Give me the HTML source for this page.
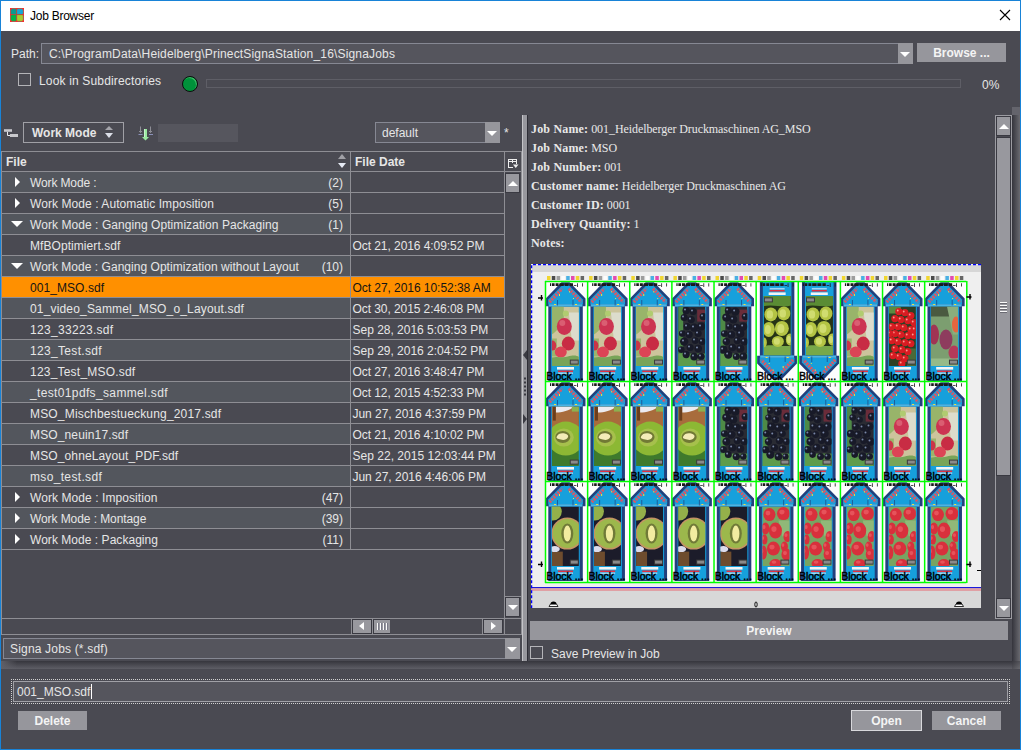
<!DOCTYPE html>
<html><head><meta charset="utf-8">
<style>
*{box-sizing:border-box}
html,body{margin:0;padding:0;width:1021px;height:750px;overflow:hidden;background:#4a4a52}
body{position:relative;font-family:"Liberation Sans",sans-serif;font-size:12px;color:#e6e6e6}
.a{position:absolute}
.t{position:absolute;white-space:nowrap;line-height:14px}
.b{font-weight:bold}
.btn{position:absolute;background:#96969c;color:#f4f4f4;font-weight:bold;text-align:center;line-height:21px}
.fld{position:absolute;background:#55555d;border:1px solid #868893}
.dd{position:absolute;background:#96969c}
.tri-d{position:absolute;width:0;height:0;border-left:5px solid transparent;border-right:5px solid transparent;border-top:5px solid #fff}
.tri-u{position:absolute;width:0;height:0;border-left:5px solid transparent;border-right:5px solid transparent;border-bottom:5px solid #fff}
.tri-r{position:absolute;width:0;height:0;border-top:5px solid transparent;border-bottom:5px solid transparent;border-left:5px solid #fff}
.tri-l{position:absolute;width:0;height:0;border-top:5px solid transparent;border-bottom:5px solid transparent;border-right:5px solid #fff}
.hl{position:absolute;height:1px;background:#8e8e94}
.vl{position:absolute;width:1px;background:#8e8e94}
.serif{font-family:"Liberation Serif",serif}
</style></head><body>
<!-- window frame -->
<div class="a" style="left:0;top:0;width:1021px;height:750px;border:1px solid #1883d7"></div>
<div class="a" style="left:1px;top:1px;width:1019px;height:30px;background:#fff"></div>
<!-- title icon -->
<svg class="a" style="left:10px;top:8px" width="14" height="14" viewBox="0 0 14 14">
<rect x="1" y="1" width="5.6" height="5.6" fill="#0a9a90"/><rect x="6.6" y="1" width="6.4" height="5.6" fill="#12a8d8"/>
<rect x="1" y="6.6" width="5.6" height="6.4" fill="#00b648"/><rect x="6.6" y="6.6" width="6.4" height="6.4" fill="#a6d030"/>
<path d="M0.6 0.6H13.4V13.4H0.6Z M6.6 0.6V13.4 M0.6 6.6H13.4" fill="none" stroke="#a84a3a" stroke-width="1"/>
<g fill="#ff2a2a"><circle cx="0.8" cy="0.8" r="1"/><circle cx="6.6" cy="0.6" r="0.9"/><circle cx="13.2" cy="0.8" r="1"/><circle cx="0.6" cy="6.6" r="0.9"/><circle cx="13.4" cy="6.6" r="0.9"/><circle cx="0.8" cy="13.2" r="1"/><circle cx="6.6" cy="13.4" r="0.9"/><circle cx="13.2" cy="13.2" r="1"/></g>
</svg>
<div class="t" style="left:30px;top:9px;color:#000;font-size:12px;letter-spacing:-0.25px">Job Browser</div>
<svg class="a" style="left:999px;top:9px" width="12" height="12" viewBox="0 0 12 12"><path d="M1 1L11 11M11 1L1 11" stroke="#000" stroke-width="1.1"/></svg>

<!-- path row -->
<div class="t" style="left:11px;top:47px">Path:</div>
<div class="fld" style="left:41px;top:43px;width:872px;height:21px"></div>
<div class="t" style="left:49px;top:47px;letter-spacing:0.17px">C:\ProgramData\Heidelberg\PrinectSignaStation_16\SignaJobs</div>
<div class="dd" style="left:898px;top:43px;width:15px;height:21px"></div>
<div class="tri-d" style="left:900px;top:52px"></div>
<div class="btn" style="left:917px;top:43px;width:89px;height:19px">Browse ...</div>

<!-- subdirs row -->
<div class="a" style="left:18px;top:73px;width:13px;height:13px;border:1px solid #b4b4b8"></div>
<div class="t" style="left:39px;top:74px;letter-spacing:0.16px">Look in Subdirectories</div>
<div class="a" style="left:182px;top:76px;width:16px;height:16px;border-radius:50%;background:#00923a;border:1.3px solid #0c0c0c;box-shadow:inset -1px 1px 0 rgba(120,230,150,0.5)"></div>
<div class="a" style="left:206px;top:79px;width:755px;height:9px;border:1px solid #5e5e66"></div>
<div class="t" style="left:982px;top:78px">0%</div>

<!-- LEFT PANEL toolbar -->
<svg class="a" style="left:3px;top:128px" width="17" height="11" viewBox="0 0 17 11">
<rect x="1" y="1.2" width="8" height="2.6" fill="#c8c8cc"/>
<rect x="7" y="6" width="8" height="3" fill="#c8c8cc"/>
<path d="M4.5 3.8V7.5H7" fill="none" stroke="#e8e8ec" stroke-width="1"/>
</svg>
<div class="a" style="left:23px;top:122px;width:101px;height:21px;border:1px solid #a0a0a6"></div>
<div class="t b" style="left:32px;top:126px;font-size:12px">Work Mode</div>
<div class="a" style="left:105px;top:126px;width:0;height:0;border-left:4.5px solid transparent;border-right:4.5px solid transparent;border-bottom:4.5px solid #a4a4aa"></div>
<div class="a" style="left:105px;top:133px;width:0;height:0;border-left:4.5px solid transparent;border-right:4.5px solid transparent;border-top:5px solid #dcdfe8"></div>
<svg class="a" style="left:138px;top:125px" width="16" height="16" viewBox="0 0 16 16">
<path d="M2.5 1.5V7.5M1 6L2.5 7.5L4 6M12.5 1.5V7.5M11 6L12.5 7.5L14 6" fill="none" stroke="#8e8e96" stroke-width="1"/>
<path d="M0.5 9.5H4.5M11 9.5H15" stroke="#8a90b8" stroke-width="1"/>
<path d="M6 4H9V12H11L7.5 15.5L4 12H6Z" fill="#9ae8a0"/>
<path d="M6.5 4V12" stroke="#c8f4cc" stroke-width="1"/>
</svg>
<div class="a" style="left:158px;top:124px;width:80px;height:18px;background:#56565e"></div>

<div class="fld" style="left:375px;top:122px;width:125px;height:21px"></div>
<div class="t" style="left:382px;top:126px">default</div>
<div class="dd" style="left:485px;top:122px;width:15px;height:21px"></div>
<div class="tri-d" style="left:487px;top:131px"></div>
<div class="t" style="left:504px;top:126px">*</div>

<!-- TABLE -->
<div class="a" style="left:1px;top:151px;width:521px;height:484px;background:#4a4a52"></div>
<div class="t b" style="left:6px;top:155px">File</div>
<div class="t b" style="left:355px;top:155px">File Date</div>
<div class="a" style="left:2px;top:172px;width:349px;height:20px;background:#53565d"></div>
<div class="t" style="left:30px;top:176px;color:#e6e6e6;letter-spacing:-0.128px">Work Mode :</div>
<div class="t" style="left:250px;width:93px;text-align:right;top:176px">(2)</div>
<div class="tri-r" style="left:15px;top:177px"></div>
<div class="t" style="left:30px;top:197px;color:#e6e6e6;letter-spacing:0.07px">Work Mode : Automatic Imposition</div>
<div class="t" style="left:250px;width:93px;text-align:right;top:197px">(5)</div>
<div class="tri-r" style="left:15px;top:198px"></div>
<div class="a" style="left:2px;top:214px;width:349px;height:20px;background:#53565d"></div>
<div class="t" style="left:30px;top:218px;color:#e6e6e6;letter-spacing:0.062px">Work Mode : Ganging Optimization Packaging</div>
<div class="t" style="left:250px;width:93px;text-align:right;top:218px">(1)</div>
<div class="tri-d" style="left:11px;top:221px;border-left-width:6px;border-right-width:6px;border-top-width:6px"></div>
<div class="t" style="left:30px;top:239px;color:#e6e6e6;letter-spacing:0.065px">MfBOptimiert.sdf</div>
<div class="t" style="left:352.5px;top:239px;color:#e6e6e6;letter-spacing:-0.062px">Oct 21, 2016 4:09:52 PM</div>
<div class="a" style="left:2px;top:256px;width:349px;height:20px;background:#53565d"></div>
<div class="t" style="left:30px;top:260px;color:#e6e6e6;letter-spacing:0.035px">Work Mode : Ganging Optimization without Layout</div>
<div class="t" style="left:250px;width:93px;text-align:right;top:260px">(10)</div>
<div class="tri-d" style="left:11px;top:263px;border-left-width:6px;border-right-width:6px;border-top-width:6px"></div>
<div class="a" style="left:2px;top:277px;width:503px;height:20px;background:#ff9000"></div>
<div class="t" style="left:30px;top:281px;color:#141414;letter-spacing:0.066px">001_MSO.sdf</div>
<div class="t" style="left:352.5px;top:281px;color:#141414;letter-spacing:-0.052px">Oct 27, 2016 10:52:38 AM</div>
<div class="a" style="left:2px;top:298px;width:349px;height:20px;background:#53565d"></div>
<div class="t" style="left:30px;top:302px;color:#e6e6e6;letter-spacing:0.166px">01_video_Sammel_MSO_o_Layout.sdf</div>
<div class="t" style="left:352.5px;top:302px;color:#e6e6e6;letter-spacing:-0.071px">Oct 30, 2015 2:46:08 PM</div>
<div class="t" style="left:30px;top:323px;color:#e6e6e6;letter-spacing:0.315px">123_33223.sdf</div>
<div class="t" style="left:352.5px;top:323px;color:#e6e6e6;letter-spacing:-0.013px">Sep 28, 2016 5:03:53 PM</div>
<div class="a" style="left:2px;top:340px;width:349px;height:20px;background:#53565d"></div>
<div class="t" style="left:30px;top:344px;color:#e6e6e6;letter-spacing:0.329px">123_Test.sdf</div>
<div class="t" style="left:352.5px;top:344px;color:#e6e6e6;letter-spacing:-0.013px">Sep 29, 2016 2:04:52 PM</div>
<div class="t" style="left:30px;top:365px;color:#e6e6e6;letter-spacing:0.209px">123_Test_MSO.sdf</div>
<div class="t" style="left:352.5px;top:365px;color:#e6e6e6;letter-spacing:-0.071px">Oct 27, 2016 3:48:47 PM</div>
<div class="a" style="left:2px;top:382px;width:349px;height:20px;background:#53565d"></div>
<div class="t" style="left:30px;top:386px;color:#e6e6e6;letter-spacing:0.356px">_test01pdfs_sammel.sdf</div>
<div class="t" style="left:352.5px;top:386px;color:#e6e6e6;letter-spacing:-0.071px">Oct 12, 2015 4:52:33 PM</div>
<div class="t" style="left:30px;top:407px;color:#e6e6e6;letter-spacing:0.176px">MSO_Mischbestueckung_2017.sdf</div>
<div class="t" style="left:352.5px;top:407px;color:#e6e6e6;letter-spacing:-0.026px">Jun 27, 2016 4:37:59 PM</div>
<div class="a" style="left:2px;top:424px;width:349px;height:20px;background:#53565d"></div>
<div class="t" style="left:30px;top:428px;color:#e6e6e6;letter-spacing:0.136px">MSO_neuin17.sdf</div>
<div class="t" style="left:352.5px;top:428px;color:#e6e6e6;letter-spacing:-0.071px">Oct 21, 2016 4:10:02 PM</div>
<div class="t" style="left:30px;top:449px;color:#e6e6e6;letter-spacing:0.131px">MSO_ohneLayout_PDF.sdf</div>
<div class="t" style="left:352.5px;top:449px;color:#e6e6e6;letter-spacing:0.017px">Sep 22, 2015 12:03:44 PM</div>
<div class="a" style="left:2px;top:466px;width:349px;height:20px;background:#53565d"></div>
<div class="t" style="left:30px;top:470px;color:#e6e6e6;letter-spacing:0.339px">mso_test.sdf</div>
<div class="t" style="left:352.5px;top:470px;color:#e6e6e6;letter-spacing:-0.026px">Jun 27, 2016 4:46:06 PM</div>
<div class="t" style="left:30px;top:491px;color:#e6e6e6;letter-spacing:0.076px">Work Mode : Imposition</div>
<div class="t" style="left:250px;width:93px;text-align:right;top:491px">(47)</div>
<div class="tri-r" style="left:15px;top:492px"></div>
<div class="a" style="left:2px;top:508px;width:349px;height:20px;background:#53565d"></div>
<div class="t" style="left:30px;top:512px;color:#e6e6e6;letter-spacing:-0.081px">Work Mode : Montage</div>
<div class="t" style="left:250px;width:93px;text-align:right;top:512px">(39)</div>
<div class="tri-r" style="left:15px;top:513px"></div>
<div class="t" style="left:30px;top:533px;color:#e6e6e6;letter-spacing:0.039px">Work Mode : Packaging</div>
<div class="t" style="left:250px;width:93px;text-align:right;top:533px">(11)</div>
<div class="tri-r" style="left:15px;top:534px"></div>
<div class="hl" style="left:1px;top:151px;width:521px"></div>
<div class="hl" style="left:1px;top:171px;width:521px"></div>
<div class="hl" style="left:1px;top:192px;width:504px"></div>
<div class="hl" style="left:1px;top:213px;width:504px"></div>
<div class="hl" style="left:1px;top:234px;width:504px"></div>
<div class="hl" style="left:1px;top:255px;width:504px"></div>
<div class="hl" style="left:1px;top:276px;width:504px"></div>
<div class="hl" style="left:1px;top:297px;width:504px"></div>
<div class="hl" style="left:1px;top:318px;width:504px"></div>
<div class="hl" style="left:1px;top:339px;width:504px"></div>
<div class="hl" style="left:1px;top:360px;width:504px"></div>
<div class="hl" style="left:1px;top:381px;width:504px"></div>
<div class="hl" style="left:1px;top:402px;width:504px"></div>
<div class="hl" style="left:1px;top:423px;width:504px"></div>
<div class="hl" style="left:1px;top:444px;width:504px"></div>
<div class="hl" style="left:1px;top:465px;width:504px"></div>
<div class="hl" style="left:1px;top:486px;width:504px"></div>
<div class="hl" style="left:1px;top:507px;width:504px"></div>
<div class="hl" style="left:1px;top:528px;width:504px"></div>
<div class="hl" style="left:1px;top:549px;width:504px"></div>
<div class="hl" style="left:1px;top:618px;width:521px"></div>
<div class="hl" style="left:1px;top:634px;width:521px"></div>
<div class="vl" style="left:1px;top:151px;height:484px"></div>
<div class="vl" style="left:350px;top:151px;height:398px"></div>
<div class="vl" style="left:504px;top:151px;height:484px"></div>
<div class="vl" style="left:521px;top:151px;height:484px"></div>
<div class="a" style="left:338px;top:154px;width:0;height:0;border-left:4.5px solid transparent;border-right:4.5px solid transparent;border-bottom:5px solid #a0a0a6"></div>
<div class="a" style="left:338px;top:163px;width:0;height:0;border-left:4.5px solid transparent;border-right:4.5px solid transparent;border-top:5px solid #e6eaf4"></div>
<svg class="a" style="left:507px;top:158px" width="12" height="11" viewBox="0 0 12 11"><path d="M1 1.5H10M1 3.5H10M1.5 1V10M5.5 1V5M9.5 1V6M1 9.5H6" fill="none" stroke="#eeeeee"/><path d="M6 6.5H11.5L8.75 10Z" fill="#eeeeee"/></svg>
<div class="a" style="left:505px;top:173px;width:15px;height:20px;background:#98989e;border:1px solid #3a3a42"></div>
<div class="tri-u" style="left:508px;top:181px"></div>
<div class="hl" style="left:505px;top:596px;width:16px"></div>
<div class="a" style="left:505px;top:597px;width:15px;height:20px;background:#98989e;border:1px solid #3a3a42"></div>
<div class="tri-d" style="left:508px;top:605px"></div>
<div class="vl" style="left:351px;top:618px;height:16px"></div>
<div class="a" style="left:352px;top:619px;width:20px;height:15px;background:#98989e;border:1px solid #3a3a42"></div>
<div class="tri-l" style="left:359px;top:622px;border-top-width:4.5px;border-bottom-width:4.5px;border-right-width:5px"></div>
<div class="vl" style="left:372px;top:618px;height:16px"></div>
<div class="a" style="left:373px;top:619px;width:17px;height:15px;background:#98989e;border:1px solid #3a3a42;border-right:none"></div>
<svg class="a" style="left:376px;top:622px" width="12" height="9"><path d="M1.5 1V8M4.5 1V8M7.5 1V8M10.5 1V8" stroke="#fafafa"/><path d="M2.5 1V8M5.5 1V8M8.5 1V8M11.5 1V8" stroke="#7a7a88"/></svg>
<div class="vl" style="left:482px;top:618px;height:16px"></div>
<div class="a" style="left:483px;top:619px;width:20px;height:15px;background:#98989e;border:1px solid #3a3a42"></div>
<div class="tri-r" style="left:491px;top:622px;border-top-width:4.5px;border-bottom-width:4.5px;border-left-width:5px"></div>
<!-- splitter -->
<div class="a" style="left:522px;top:115px;width:1px;height:546px;background:#c4c4c8"></div>
<div class="a" style="left:523px;top:115px;width:4px;height:546px;background:#98989e"></div>
<div class="a" style="left:527px;top:115px;width:1px;height:546px;background:#2e2e36"></div>
<div class="a" style="left:523px;top:350px;width:0;height:0;border-top:5px solid transparent;border-bottom:5px solid transparent;border-right:4px solid #3a3a42"></div>
<div class="a" style="left:523px;top:414px;width:0;height:0;border-top:5px solid transparent;border-bottom:5px solid transparent;border-left:4px solid #3a3a42"></div>
<svg class="a" style="left:523px;top:377px" width="4" height="20"><path d="M1 1.5H3M1 5.5H3M1 9.5H3M1 13.5H3M1 17.5H3" stroke="#3a3a42" stroke-width="2"/></svg>
<!-- RIGHT PANEL -->
<div class="serif t" style="left:531px;top:120px;line-height:19px;font-size:12px;color:#e8e8e8;letter-spacing:-0.08px">
<b style="letter-spacing:0.18px">Job Name:</b> 001_Heidelberger Druckmaschinen AG_MSO<br>
<b style="letter-spacing:0.18px">Job Name:</b> MSO<br>
<b style="letter-spacing:0.18px">Job Number:</b> 001<br>
<b style="letter-spacing:0.18px">Customer name:</b> Heidelberger Druckmaschinen AG<br>
<b style="letter-spacing:0.18px">Customer ID:</b> 0001<br>
<b style="letter-spacing:0.18px">Delivery Quantity:</b> 1<br>
<b style="letter-spacing:0.18px">Notes:</b>
</div>

<!-- right scrollbar -->
<div class="a" style="left:1012px;top:107px;width:8px;height:554px;background:linear-gradient(90deg,#34343c,#6a6a70)"></div>
<div class="a" style="left:1012px;top:107px;width:8px;height:8px;background:#64646c"></div>
<div class="a" style="left:995px;top:115px;width:17px;height:504px;border:1px solid #9c9ca2;background:#4a4a52"></div>
<div class="a" style="left:996px;top:116px;width:15px;height:20px;background:#98989e;border:1px solid #3a3a42"></div>
<div class="tri-u" style="left:999px;top:124px"></div>
<div class="a" style="left:996px;top:137px;width:15px;height:339px;background:#98989e;border:1px solid #3a3a42"></div>
<svg class="a" style="left:1000px;top:301px" width="8" height="13"><path d="M0 1.5H7M0 4.5H7M0 7.5H7M0 10.5H7" stroke="#fafafa" stroke-width="1"/><path d="M0 2.5H7M0 5.5H7M0 8.5H7M0 11.5H7" stroke="#6a6a72" stroke-width="1"/></svg>
<div class="a" style="left:996px;top:598px;width:15px;height:20px;background:#98989e;border:1px solid #3a3a42"></div>
<div class="tri-d" style="left:999px;top:606px"></div>
<!-- preview -->
<svg class="a" style="left:531px;top:264px" width="450" height="344" viewBox="0 0 450 344">
<rect width="450" height="344" fill="#efefef"/>
<rect x="1" y="1" width="449" height="7" fill="#d6d6d6"/>
<rect x="14" y="17" width="422" height="301" fill="#fdfdfd"/>
<rect x="16.0" y="12" width="3.5" height="4" fill="#f0d000" opacity="0.8"/>
<rect x="20.8" y="12" width="3.5" height="4" fill="#222" opacity="0.8"/>
<rect x="25.6" y="12" width="3.5" height="4" fill="#888" opacity="0.8"/>
<rect x="30.4" y="12" width="3.5" height="4" fill="#fff" opacity="0.8"/>
<rect x="35.2" y="12" width="3.5" height="4" fill="#20a0e0" opacity="0.8"/>
<rect x="40.0" y="12" width="3.5" height="4" fill="#e020a0" opacity="0.8"/>
<rect x="44.8" y="12" width="3.5" height="4" fill="#f0d000" opacity="0.8"/>
<rect x="49.6" y="12" width="3.5" height="4" fill="#444" opacity="0.8"/>
<rect x="58.1" y="12" width="3.5" height="4" fill="#f0d000" opacity="0.8"/>
<rect x="62.9" y="12" width="3.5" height="4" fill="#222" opacity="0.8"/>
<rect x="67.7" y="12" width="3.5" height="4" fill="#888" opacity="0.8"/>
<rect x="72.5" y="12" width="3.5" height="4" fill="#fff" opacity="0.8"/>
<rect x="77.3" y="12" width="3.5" height="4" fill="#20a0e0" opacity="0.8"/>
<rect x="82.1" y="12" width="3.5" height="4" fill="#e020a0" opacity="0.8"/>
<rect x="86.9" y="12" width="3.5" height="4" fill="#f0d000" opacity="0.8"/>
<rect x="91.7" y="12" width="3.5" height="4" fill="#444" opacity="0.8"/>
<rect x="100.3" y="12" width="3.5" height="4" fill="#f0d000" opacity="0.8"/>
<rect x="105.1" y="12" width="3.5" height="4" fill="#222" opacity="0.8"/>
<rect x="109.9" y="12" width="3.5" height="4" fill="#888" opacity="0.8"/>
<rect x="114.7" y="12" width="3.5" height="4" fill="#fff" opacity="0.8"/>
<rect x="119.5" y="12" width="3.5" height="4" fill="#20a0e0" opacity="0.8"/>
<rect x="124.3" y="12" width="3.5" height="4" fill="#e020a0" opacity="0.8"/>
<rect x="129.1" y="12" width="3.5" height="4" fill="#f0d000" opacity="0.8"/>
<rect x="133.9" y="12" width="3.5" height="4" fill="#444" opacity="0.8"/>
<rect x="142.4" y="12" width="3.5" height="4" fill="#f0d000" opacity="0.8"/>
<rect x="147.2" y="12" width="3.5" height="4" fill="#222" opacity="0.8"/>
<rect x="152.0" y="12" width="3.5" height="4" fill="#888" opacity="0.8"/>
<rect x="156.8" y="12" width="3.5" height="4" fill="#fff" opacity="0.8"/>
<rect x="161.6" y="12" width="3.5" height="4" fill="#20a0e0" opacity="0.8"/>
<rect x="166.4" y="12" width="3.5" height="4" fill="#e020a0" opacity="0.8"/>
<rect x="171.2" y="12" width="3.5" height="4" fill="#f0d000" opacity="0.8"/>
<rect x="176.0" y="12" width="3.5" height="4" fill="#444" opacity="0.8"/>
<rect x="184.5" y="12" width="3.5" height="4" fill="#f0d000" opacity="0.8"/>
<rect x="189.3" y="12" width="3.5" height="4" fill="#222" opacity="0.8"/>
<rect x="194.1" y="12" width="3.5" height="4" fill="#888" opacity="0.8"/>
<rect x="198.9" y="12" width="3.5" height="4" fill="#fff" opacity="0.8"/>
<rect x="203.7" y="12" width="3.5" height="4" fill="#20a0e0" opacity="0.8"/>
<rect x="208.5" y="12" width="3.5" height="4" fill="#e020a0" opacity="0.8"/>
<rect x="213.3" y="12" width="3.5" height="4" fill="#f0d000" opacity="0.8"/>
<rect x="218.1" y="12" width="3.5" height="4" fill="#444" opacity="0.8"/>
<rect x="226.7" y="12" width="3.5" height="4" fill="#f0d000" opacity="0.8"/>
<rect x="231.5" y="12" width="3.5" height="4" fill="#222" opacity="0.8"/>
<rect x="236.2" y="12" width="3.5" height="4" fill="#888" opacity="0.8"/>
<rect x="241.1" y="12" width="3.5" height="4" fill="#fff" opacity="0.8"/>
<rect x="245.8" y="12" width="3.5" height="4" fill="#20a0e0" opacity="0.8"/>
<rect x="250.7" y="12" width="3.5" height="4" fill="#e020a0" opacity="0.8"/>
<rect x="255.4" y="12" width="3.5" height="4" fill="#f0d000" opacity="0.8"/>
<rect x="260.2" y="12" width="3.5" height="4" fill="#444" opacity="0.8"/>
<rect x="268.8" y="12" width="3.5" height="4" fill="#f0d000" opacity="0.8"/>
<rect x="273.6" y="12" width="3.5" height="4" fill="#222" opacity="0.8"/>
<rect x="278.4" y="12" width="3.5" height="4" fill="#888" opacity="0.8"/>
<rect x="283.2" y="12" width="3.5" height="4" fill="#fff" opacity="0.8"/>
<rect x="288.0" y="12" width="3.5" height="4" fill="#20a0e0" opacity="0.8"/>
<rect x="292.8" y="12" width="3.5" height="4" fill="#e020a0" opacity="0.8"/>
<rect x="297.6" y="12" width="3.5" height="4" fill="#f0d000" opacity="0.8"/>
<rect x="302.4" y="12" width="3.5" height="4" fill="#444" opacity="0.8"/>
<rect x="310.9" y="12" width="3.5" height="4" fill="#f0d000" opacity="0.8"/>
<rect x="315.7" y="12" width="3.5" height="4" fill="#222" opacity="0.8"/>
<rect x="320.5" y="12" width="3.5" height="4" fill="#888" opacity="0.8"/>
<rect x="325.3" y="12" width="3.5" height="4" fill="#fff" opacity="0.8"/>
<rect x="330.1" y="12" width="3.5" height="4" fill="#20a0e0" opacity="0.8"/>
<rect x="334.9" y="12" width="3.5" height="4" fill="#e020a0" opacity="0.8"/>
<rect x="339.7" y="12" width="3.5" height="4" fill="#f0d000" opacity="0.8"/>
<rect x="344.5" y="12" width="3.5" height="4" fill="#444" opacity="0.8"/>
<rect x="353.0" y="12" width="3.5" height="4" fill="#f0d000" opacity="0.8"/>
<rect x="357.8" y="12" width="3.5" height="4" fill="#222" opacity="0.8"/>
<rect x="362.6" y="12" width="3.5" height="4" fill="#888" opacity="0.8"/>
<rect x="367.4" y="12" width="3.5" height="4" fill="#fff" opacity="0.8"/>
<rect x="372.2" y="12" width="3.5" height="4" fill="#20a0e0" opacity="0.8"/>
<rect x="377.0" y="12" width="3.5" height="4" fill="#e020a0" opacity="0.8"/>
<rect x="381.8" y="12" width="3.5" height="4" fill="#f0d000" opacity="0.8"/>
<rect x="386.6" y="12" width="3.5" height="4" fill="#444" opacity="0.8"/>
<rect x="395.2" y="12" width="3.5" height="4" fill="#f0d000" opacity="0.8"/>
<rect x="400.0" y="12" width="3.5" height="4" fill="#222" opacity="0.8"/>
<rect x="404.8" y="12" width="3.5" height="4" fill="#888" opacity="0.8"/>
<rect x="409.6" y="12" width="3.5" height="4" fill="#fff" opacity="0.8"/>
<rect x="414.4" y="12" width="3.5" height="4" fill="#20a0e0" opacity="0.8"/>
<rect x="419.2" y="12" width="3.5" height="4" fill="#e020a0" opacity="0.8"/>
<rect x="424.0" y="12" width="3.5" height="4" fill="#f0d000" opacity="0.8"/>
<rect x="428.8" y="12" width="3.5" height="4" fill="#444" opacity="0.8"/>
<g transform="translate(14.00,17)"><path d="M0.7 25.3V17.6L16.4 1.2H24.6L40.5 17.6V25.3H37.8V100H3.3V25.3Z" fill="#22407c"/><path d="M3.2 23.2V18.6L17.5 4H23.5L37.9 18.6V23.2Z" fill="#16a0dc"/><rect x="3.6" y="23.2" width="33.9" height="2.4" fill="#48b6e6"/><rect x="6.2" y="25.5" width="28.6" height="73.5" fill="#16a0dc"/><path d="M4.6 21.2L17.2 7.6M23.8 7.6L36.4 21.2" stroke="#dc5664" stroke-width="3.2" stroke-dasharray="2 1"/><path d="M9 23.5H11M30 23.5H32M14.5 13V15M24.5 10.2V11.4M28.5 17V18" stroke="#f2e040" stroke-width="1"/><path d="M12.5 19V24.5M28 19V24.5" stroke="#22407c" stroke-width="0.7"/><clipPath id="c1"><rect x="0" y="0" width="27" height="59.4"/></clipPath><g transform="translate(6.8,25.6)" clip-path="url(#c1)"><rect width="28" height="60" fill="#ccc49c"/><path d="M0 0H12V14C8 20 4 26 0 28Z" fill="#98b46a"/><path d="M17 6H28V34H20Z" fill="#dcdccc"/><path d="M0 32H5V50H0Z" fill="#9ab46c"/><ellipse cx="14" cy="7" rx="3" ry="3" fill="#b0cc70"/><ellipse cx="12.5" cy="20" rx="7.5" ry="8.5" fill="#cc3452"/><ellipse cx="10.5" cy="16.5" rx="3" ry="3" fill="#e07080" opacity="0.7"/><ellipse cx="16.5" cy="37" rx="6.5" ry="7" fill="#c82c44"/><ellipse cx="9" cy="45.5" rx="6" ry="5.5" fill="#dc4456"/><ellipse cx="0.5" cy="39" rx="4" ry="5" fill="#cc3448"/><path d="M0 51C6 49 10 52 16 50S26 49 28 51V60H0Z" fill="#78a458"/><rect x="18" y="53" width="9" height="5" fill="#3a3a3a"/><rect x="19" y="54" width="7" height="3" fill="#8a8a8a"/></g><rect x="12" y="86" width="17" height="2.6" fill="#f4f4f4"/><rect x="13" y="89.5" width="15" height="1.6" fill="#e03040"/><rect x="13" y="91.5" width="15" height="1.6" fill="#dcefff" opacity="0.7"/><path d="M5 2.3h1.2v2.8H5zM7 2.3h2.6v2.8H7zM10.6 2.3h3v2.8h-3zM14.4 2.3h4.4v2.8h-4.4zM19.6 2.3h4v2.8h-4zM24.6 2.3h3.4v2.8h-3.4zM28.8 3.9h2.6v0.8h-2.6zM32 2.2h0.8v3.8H32zM37 2.2h0.8v3.4H37z" fill="#1a1a1a"/><text x="1.3" y="98.8" font-family="Liberation Sans" font-size="10.5" fill="#000" textLength="37" lengthAdjust="spacing" stroke="#000" stroke-width="0.45">Block ...</text></g>
<g transform="translate(56.13,17)"><path d="M0.7 25.3V17.6L16.4 1.2H24.6L40.5 17.6V25.3H37.8V100H3.3V25.3Z" fill="#22407c"/><path d="M3.2 23.2V18.6L17.5 4H23.5L37.9 18.6V23.2Z" fill="#16a0dc"/><rect x="3.6" y="23.2" width="33.9" height="2.4" fill="#48b6e6"/><rect x="6.2" y="25.5" width="28.6" height="73.5" fill="#16a0dc"/><path d="M4.6 21.2L17.2 7.6M23.8 7.6L36.4 21.2" stroke="#dc5664" stroke-width="3.2" stroke-dasharray="2 1"/><path d="M9 23.5H11M30 23.5H32M14.5 13V15M24.5 10.2V11.4M28.5 17V18" stroke="#f2e040" stroke-width="1"/><path d="M12.5 19V24.5M28 19V24.5" stroke="#22407c" stroke-width="0.7"/><clipPath id="c2"><rect x="0" y="0" width="27" height="59.4"/></clipPath><g transform="translate(6.8,25.6)" clip-path="url(#c2)"><rect width="28" height="60" fill="#ccc49c"/><path d="M0 0H12V14C8 20 4 26 0 28Z" fill="#98b46a"/><path d="M17 6H28V34H20Z" fill="#dcdccc"/><path d="M0 32H5V50H0Z" fill="#9ab46c"/><ellipse cx="14" cy="7" rx="3" ry="3" fill="#b0cc70"/><ellipse cx="12.5" cy="20" rx="7.5" ry="8.5" fill="#cc3452"/><ellipse cx="10.5" cy="16.5" rx="3" ry="3" fill="#e07080" opacity="0.7"/><ellipse cx="16.5" cy="37" rx="6.5" ry="7" fill="#c82c44"/><ellipse cx="9" cy="45.5" rx="6" ry="5.5" fill="#dc4456"/><ellipse cx="0.5" cy="39" rx="4" ry="5" fill="#cc3448"/><path d="M0 51C6 49 10 52 16 50S26 49 28 51V60H0Z" fill="#78a458"/><rect x="18" y="53" width="9" height="5" fill="#3a3a3a"/><rect x="19" y="54" width="7" height="3" fill="#8a8a8a"/></g><rect x="12" y="86" width="17" height="2.6" fill="#f4f4f4"/><rect x="13" y="89.5" width="15" height="1.6" fill="#e03040"/><rect x="13" y="91.5" width="15" height="1.6" fill="#dcefff" opacity="0.7"/><path d="M5 2.3h1.2v2.8H5zM7 2.3h2.6v2.8H7zM10.6 2.3h3v2.8h-3zM14.4 2.3h4.4v2.8h-4.4zM19.6 2.3h4v2.8h-4zM24.6 2.3h3.4v2.8h-3.4zM28.8 3.9h2.6v0.8h-2.6zM32 2.2h0.8v3.8H32zM37 2.2h0.8v3.4H37z" fill="#1a1a1a"/><text x="1.3" y="98.8" font-family="Liberation Sans" font-size="10.5" fill="#000" textLength="37" lengthAdjust="spacing" stroke="#000" stroke-width="0.45">Block ...</text></g>
<g transform="translate(98.26,17)"><path d="M0.7 25.3V17.6L16.4 1.2H24.6L40.5 17.6V25.3H37.8V100H3.3V25.3Z" fill="#22407c"/><path d="M3.2 23.2V18.6L17.5 4H23.5L37.9 18.6V23.2Z" fill="#16a0dc"/><rect x="3.6" y="23.2" width="33.9" height="2.4" fill="#48b6e6"/><rect x="6.2" y="25.5" width="28.6" height="73.5" fill="#16a0dc"/><path d="M4.6 21.2L17.2 7.6M23.8 7.6L36.4 21.2" stroke="#dc5664" stroke-width="3.2" stroke-dasharray="2 1"/><path d="M9 23.5H11M30 23.5H32M14.5 13V15M24.5 10.2V11.4M28.5 17V18" stroke="#f2e040" stroke-width="1"/><path d="M12.5 19V24.5M28 19V24.5" stroke="#22407c" stroke-width="0.7"/><clipPath id="c3"><rect x="0" y="0" width="27" height="59.4"/></clipPath><g transform="translate(6.8,25.6)" clip-path="url(#c3)"><rect width="28" height="60" fill="#ccc49c"/><path d="M0 0H12V14C8 20 4 26 0 28Z" fill="#98b46a"/><path d="M17 6H28V34H20Z" fill="#dcdccc"/><path d="M0 32H5V50H0Z" fill="#9ab46c"/><ellipse cx="14" cy="7" rx="3" ry="3" fill="#b0cc70"/><ellipse cx="12.5" cy="20" rx="7.5" ry="8.5" fill="#cc3452"/><ellipse cx="10.5" cy="16.5" rx="3" ry="3" fill="#e07080" opacity="0.7"/><ellipse cx="16.5" cy="37" rx="6.5" ry="7" fill="#c82c44"/><ellipse cx="9" cy="45.5" rx="6" ry="5.5" fill="#dc4456"/><ellipse cx="0.5" cy="39" rx="4" ry="5" fill="#cc3448"/><path d="M0 51C6 49 10 52 16 50S26 49 28 51V60H0Z" fill="#78a458"/><rect x="18" y="53" width="9" height="5" fill="#3a3a3a"/><rect x="19" y="54" width="7" height="3" fill="#8a8a8a"/></g><rect x="12" y="86" width="17" height="2.6" fill="#f4f4f4"/><rect x="13" y="89.5" width="15" height="1.6" fill="#e03040"/><rect x="13" y="91.5" width="15" height="1.6" fill="#dcefff" opacity="0.7"/><path d="M5 2.3h1.2v2.8H5zM7 2.3h2.6v2.8H7zM10.6 2.3h3v2.8h-3zM14.4 2.3h4.4v2.8h-4.4zM19.6 2.3h4v2.8h-4zM24.6 2.3h3.4v2.8h-3.4zM28.8 3.9h2.6v0.8h-2.6zM32 2.2h0.8v3.8H32zM37 2.2h0.8v3.4H37z" fill="#1a1a1a"/><text x="1.3" y="98.8" font-family="Liberation Sans" font-size="10.5" fill="#000" textLength="37" lengthAdjust="spacing" stroke="#000" stroke-width="0.45">Block ...</text></g>
<g transform="translate(140.39,17)"><path d="M0.7 25.3V17.6L16.4 1.2H24.6L40.5 17.6V25.3H37.8V100H3.3V25.3Z" fill="#22407c"/><path d="M3.2 23.2V18.6L17.5 4H23.5L37.9 18.6V23.2Z" fill="#16a0dc"/><rect x="3.6" y="23.2" width="33.9" height="2.4" fill="#48b6e6"/><rect x="6.2" y="25.5" width="28.6" height="73.5" fill="#16a0dc"/><path d="M4.6 21.2L17.2 7.6M23.8 7.6L36.4 21.2" stroke="#dc5664" stroke-width="3.2" stroke-dasharray="2 1"/><path d="M9 23.5H11M30 23.5H32M14.5 13V15M24.5 10.2V11.4M28.5 17V18" stroke="#f2e040" stroke-width="1"/><path d="M12.5 19V24.5M28 19V24.5" stroke="#22407c" stroke-width="0.7"/><clipPath id="c4"><rect x="0" y="0" width="27" height="59.4"/></clipPath><g transform="translate(6.8,25.6)" clip-path="url(#c4)"><rect width="28" height="60" fill="#2a2c34"/><rect width="5" height="60" fill="#4e8a46"/><rect x="19" y="3" width="9" height="12" fill="#6a2c3a"/><rect y="47" width="28" height="13" fill="#5e9c4c"/><circle cx="8" cy="4" r="3.7" fill="#181a28"/><circle cx="6.8" cy="2.8" r="1" fill="#7a88a8"/><circle cx="15" cy="5" r="3.5" fill="#181a28"/><circle cx="13.8" cy="3.8" r="1" fill="#7a88a8"/><circle cx="23" cy="20" r="4.0" fill="#181a28"/><circle cx="21.8" cy="18.8" r="1" fill="#7a88a8"/><circle cx="6" cy="11" r="3.5" fill="#181a28"/><circle cx="4.8" cy="9.8" r="1" fill="#7a88a8"/><circle cx="13" cy="13" r="3.7" fill="#181a28"/><circle cx="11.8" cy="11.8" r="1" fill="#7a88a8"/><circle cx="20" cy="27" r="3.5" fill="#181a28"/><circle cx="18.8" cy="25.8" r="1" fill="#7a88a8"/><circle cx="9" cy="20" r="3.6" fill="#181a28"/><circle cx="7.8" cy="18.8" r="1" fill="#7a88a8"/><circle cx="16" cy="21" r="4.2" fill="#181a28"/><circle cx="14.8" cy="19.8" r="1" fill="#7a88a8"/><circle cx="4" cy="27" r="3.3" fill="#181a28"/><circle cx="2.8" cy="25.8" r="1" fill="#7a88a8"/><circle cx="11" cy="28" r="3.6" fill="#181a28"/><circle cx="9.8" cy="26.8" r="1" fill="#7a88a8"/><circle cx="17" cy="34" r="3.4" fill="#181a28"/><circle cx="15.8" cy="32.8" r="1" fill="#7a88a8"/><circle cx="24" cy="35" r="3.5" fill="#181a28"/><circle cx="22.8" cy="33.8" r="1" fill="#7a88a8"/><circle cx="6" cy="35" r="4.2" fill="#181a28"/><circle cx="4.8" cy="33.8" r="1" fill="#7a88a8"/><circle cx="12" cy="41" r="3.5" fill="#181a28"/><circle cx="10.8" cy="39.8" r="1" fill="#7a88a8"/><circle cx="20" cy="42" r="3.8" fill="#181a28"/><circle cx="18.8" cy="40.8" r="1" fill="#7a88a8"/><circle cx="8" cy="48" r="3.6" fill="#181a28"/><circle cx="6.8" cy="46.8" r="1" fill="#7a88a8"/><circle cx="16" cy="50" r="3.9" fill="#181a28"/><circle cx="14.8" cy="48.8" r="1" fill="#7a88a8"/><circle cx="23" cy="50" r="3.6" fill="#181a28"/><circle cx="21.8" cy="48.8" r="1" fill="#7a88a8"/><circle cx="3" cy="43" r="3.4" fill="#181a28"/><circle cx="1.8" cy="41.8" r="1" fill="#7a88a8"/><circle cx="25" cy="10" r="3.6" fill="#181a28"/><circle cx="23.8" cy="8.8" r="1" fill="#7a88a8"/><rect x="18" y="53" width="9" height="5" fill="#3a3a3a"/><rect x="19" y="54" width="7" height="3" fill="#8a8a8a"/></g><rect x="12" y="86" width="17" height="2.6" fill="#f4f4f4"/><rect x="13" y="89.5" width="15" height="1.6" fill="#e03040"/><rect x="13" y="91.5" width="15" height="1.6" fill="#dcefff" opacity="0.7"/><path d="M5 2.3h1.2v2.8H5zM7 2.3h2.6v2.8H7zM10.6 2.3h3v2.8h-3zM14.4 2.3h4.4v2.8h-4.4zM19.6 2.3h4v2.8h-4zM24.6 2.3h3.4v2.8h-3.4zM28.8 3.9h2.6v0.8h-2.6zM32 2.2h0.8v3.8H32zM37 2.2h0.8v3.4H37z" fill="#1a1a1a"/><text x="1.3" y="98.8" font-family="Liberation Sans" font-size="10.5" fill="#000" textLength="37" lengthAdjust="spacing" stroke="#000" stroke-width="0.45">Block ...</text></g>
<g transform="translate(182.52,17)"><path d="M0.7 25.3V17.6L16.4 1.2H24.6L40.5 17.6V25.3H37.8V100H3.3V25.3Z" fill="#22407c"/><path d="M3.2 23.2V18.6L17.5 4H23.5L37.9 18.6V23.2Z" fill="#16a0dc"/><rect x="3.6" y="23.2" width="33.9" height="2.4" fill="#48b6e6"/><rect x="6.2" y="25.5" width="28.6" height="73.5" fill="#16a0dc"/><path d="M4.6 21.2L17.2 7.6M23.8 7.6L36.4 21.2" stroke="#dc5664" stroke-width="3.2" stroke-dasharray="2 1"/><path d="M9 23.5H11M30 23.5H32M14.5 13V15M24.5 10.2V11.4M28.5 17V18" stroke="#f2e040" stroke-width="1"/><path d="M12.5 19V24.5M28 19V24.5" stroke="#22407c" stroke-width="0.7"/><clipPath id="c5"><rect x="0" y="0" width="27" height="59.4"/></clipPath><g transform="translate(6.8,25.6)" clip-path="url(#c5)"><rect width="28" height="60" fill="#2a2c34"/><rect width="5" height="60" fill="#4e8a46"/><rect x="19" y="3" width="9" height="12" fill="#6a2c3a"/><rect y="47" width="28" height="13" fill="#5e9c4c"/><circle cx="8" cy="4" r="3.5" fill="#181a28"/><circle cx="6.8" cy="2.8" r="1" fill="#7a88a8"/><circle cx="15" cy="5" r="4.2" fill="#181a28"/><circle cx="13.8" cy="3.8" r="1" fill="#7a88a8"/><circle cx="23" cy="20" r="4.2" fill="#181a28"/><circle cx="21.8" cy="18.8" r="1" fill="#7a88a8"/><circle cx="6" cy="11" r="4.1" fill="#181a28"/><circle cx="4.8" cy="9.8" r="1" fill="#7a88a8"/><circle cx="13" cy="13" r="4.0" fill="#181a28"/><circle cx="11.8" cy="11.8" r="1" fill="#7a88a8"/><circle cx="20" cy="27" r="4.1" fill="#181a28"/><circle cx="18.8" cy="25.8" r="1" fill="#7a88a8"/><circle cx="9" cy="20" r="3.2" fill="#181a28"/><circle cx="7.8" cy="18.8" r="1" fill="#7a88a8"/><circle cx="16" cy="21" r="3.8" fill="#181a28"/><circle cx="14.8" cy="19.8" r="1" fill="#7a88a8"/><circle cx="4" cy="27" r="3.4" fill="#181a28"/><circle cx="2.8" cy="25.8" r="1" fill="#7a88a8"/><circle cx="11" cy="28" r="3.9" fill="#181a28"/><circle cx="9.8" cy="26.8" r="1" fill="#7a88a8"/><circle cx="17" cy="34" r="3.6" fill="#181a28"/><circle cx="15.8" cy="32.8" r="1" fill="#7a88a8"/><circle cx="24" cy="35" r="3.8" fill="#181a28"/><circle cx="22.8" cy="33.8" r="1" fill="#7a88a8"/><circle cx="6" cy="35" r="3.7" fill="#181a28"/><circle cx="4.8" cy="33.8" r="1" fill="#7a88a8"/><circle cx="12" cy="41" r="3.8" fill="#181a28"/><circle cx="10.8" cy="39.8" r="1" fill="#7a88a8"/><circle cx="20" cy="42" r="4.0" fill="#181a28"/><circle cx="18.8" cy="40.8" r="1" fill="#7a88a8"/><circle cx="8" cy="48" r="4.2" fill="#181a28"/><circle cx="6.8" cy="46.8" r="1" fill="#7a88a8"/><circle cx="16" cy="50" r="3.5" fill="#181a28"/><circle cx="14.8" cy="48.8" r="1" fill="#7a88a8"/><circle cx="23" cy="50" r="4.0" fill="#181a28"/><circle cx="21.8" cy="48.8" r="1" fill="#7a88a8"/><circle cx="3" cy="43" r="4.1" fill="#181a28"/><circle cx="1.8" cy="41.8" r="1" fill="#7a88a8"/><circle cx="25" cy="10" r="3.6" fill="#181a28"/><circle cx="23.8" cy="8.8" r="1" fill="#7a88a8"/><rect x="18" y="53" width="9" height="5" fill="#3a3a3a"/><rect x="19" y="54" width="7" height="3" fill="#8a8a8a"/></g><rect x="12" y="86" width="17" height="2.6" fill="#f4f4f4"/><rect x="13" y="89.5" width="15" height="1.6" fill="#e03040"/><rect x="13" y="91.5" width="15" height="1.6" fill="#dcefff" opacity="0.7"/><path d="M5 2.3h1.2v2.8H5zM7 2.3h2.6v2.8H7zM10.6 2.3h3v2.8h-3zM14.4 2.3h4.4v2.8h-4.4zM19.6 2.3h4v2.8h-4zM24.6 2.3h3.4v2.8h-3.4zM28.8 3.9h2.6v0.8h-2.6zM32 2.2h0.8v3.8H32zM37 2.2h0.8v3.4H37z" fill="#1a1a1a"/><text x="1.3" y="98.8" font-family="Liberation Sans" font-size="10.5" fill="#000" textLength="37" lengthAdjust="spacing" stroke="#000" stroke-width="0.45">Block ...</text></g>
<g transform="translate(224.65,17)"><g transform="rotate(180 21 50)"><path d="M0.7 25.3V17.6L16.4 1.2H24.6L40.5 17.6V25.3H37.8V100H3.3V25.3Z" fill="#22407c"/><path d="M3.2 23.2V18.6L17.5 4H23.5L37.9 18.6V23.2Z" fill="#16a0dc"/><rect x="3.6" y="23.2" width="33.9" height="2.4" fill="#48b6e6"/><rect x="6.2" y="25.5" width="28.6" height="73.5" fill="#16a0dc"/><path d="M4.6 21.2L17.2 7.6M23.8 7.6L36.4 21.2" stroke="#dc5664" stroke-width="3.2" stroke-dasharray="2 1"/><path d="M9 23.5H11M30 23.5H32M14.5 13V15M24.5 10.2V11.4M28.5 17V18" stroke="#f2e040" stroke-width="1"/><path d="M12.5 19V24.5M28 19V24.5" stroke="#22407c" stroke-width="0.7"/><clipPath id="c6"><rect x="0" y="0" width="27" height="59.4"/></clipPath><g transform="translate(6.8,25.6)" clip-path="url(#c6)"><rect width="28" height="60" fill="#263416"/><path d="M0 0H28V9C20 12 8 8 0 10Z" fill="#78a84a"/><path d="M0 50C8 47 18 52 28 49V60H0Z" fill="#5a8c34"/><ellipse cx="7" cy="42" rx="6.5" ry="7" fill="#b4c444"/><ellipse cx="8" cy="42" rx="3.2" ry="4.2" fill="#d0dc70"/><ellipse cx="20" cy="41" rx="6.5" ry="7" fill="#b4c444"/><ellipse cx="21" cy="41" rx="3.2" ry="4.2" fill="#d0dc70"/><ellipse cx="9" cy="27" rx="7" ry="7.5" fill="#b4c444"/><ellipse cx="10" cy="27" rx="3.5" ry="4.5" fill="#d0dc70"/><ellipse cx="22" cy="26" rx="6" ry="7.5" fill="#b4c444"/><ellipse cx="23" cy="26" rx="3.0" ry="4.5" fill="#d0dc70"/><ellipse cx="13" cy="14" rx="6" ry="5.5" fill="#b4c444"/><ellipse cx="14" cy="14" rx="3.0" ry="3.3" fill="#d0dc70"/><ellipse cx="1" cy="16" rx="4" ry="6" fill="#b4c444"/><ellipse cx="2" cy="16" rx="2.0" ry="3.6" fill="#d0dc70"/><ellipse cx="27" cy="13" rx="3" ry="5" fill="#b4c444"/><ellipse cx="28" cy="13" rx="1.5" ry="3.0" fill="#d0dc70"/><rect x="18" y="53" width="9" height="5" fill="#3a3a3a"/><rect x="19" y="54" width="7" height="3" fill="#8a8a8a"/></g><rect x="12" y="86" width="17" height="2.6" fill="#f4f4f4"/><rect x="13" y="89.5" width="15" height="1.6" fill="#e03040"/><rect x="13" y="91.5" width="15" height="1.6" fill="#dcefff" opacity="0.7"/></g><path d="M5 2.3h1.2v2.8H5zM7 2.3h2.6v2.8H7zM10.6 2.3h3v2.8h-3zM14.4 2.3h4.4v2.8h-4.4zM19.6 2.3h4v2.8h-4zM24.6 2.3h3.4v2.8h-3.4zM28.8 3.9h2.6v0.8h-2.6zM32 2.2h0.8v3.8H32zM37 2.2h0.8v3.4H37z" fill="#1a1a1a"/><text x="1.3" y="98.8" font-family="Liberation Sans" font-size="10.5" fill="#000" textLength="37" lengthAdjust="spacing" stroke="#000" stroke-width="0.45">Block ...</text></g>
<g transform="translate(266.78,17)"><g transform="rotate(180 21 50)"><path d="M0.7 25.3V17.6L16.4 1.2H24.6L40.5 17.6V25.3H37.8V100H3.3V25.3Z" fill="#22407c"/><path d="M3.2 23.2V18.6L17.5 4H23.5L37.9 18.6V23.2Z" fill="#16a0dc"/><rect x="3.6" y="23.2" width="33.9" height="2.4" fill="#48b6e6"/><rect x="6.2" y="25.5" width="28.6" height="73.5" fill="#16a0dc"/><path d="M4.6 21.2L17.2 7.6M23.8 7.6L36.4 21.2" stroke="#dc5664" stroke-width="3.2" stroke-dasharray="2 1"/><path d="M9 23.5H11M30 23.5H32M14.5 13V15M24.5 10.2V11.4M28.5 17V18" stroke="#f2e040" stroke-width="1"/><path d="M12.5 19V24.5M28 19V24.5" stroke="#22407c" stroke-width="0.7"/><clipPath id="c7"><rect x="0" y="0" width="27" height="59.4"/></clipPath><g transform="translate(6.8,25.6)" clip-path="url(#c7)"><rect width="28" height="60" fill="#263416"/><path d="M0 0H28V9C20 12 8 8 0 10Z" fill="#78a84a"/><path d="M0 50C8 47 18 52 28 49V60H0Z" fill="#5a8c34"/><ellipse cx="7" cy="42" rx="6.5" ry="7" fill="#b4c444"/><ellipse cx="8" cy="42" rx="3.2" ry="4.2" fill="#d0dc70"/><ellipse cx="20" cy="41" rx="6.5" ry="7" fill="#b4c444"/><ellipse cx="21" cy="41" rx="3.2" ry="4.2" fill="#d0dc70"/><ellipse cx="9" cy="27" rx="7" ry="7.5" fill="#b4c444"/><ellipse cx="10" cy="27" rx="3.5" ry="4.5" fill="#d0dc70"/><ellipse cx="22" cy="26" rx="6" ry="7.5" fill="#b4c444"/><ellipse cx="23" cy="26" rx="3.0" ry="4.5" fill="#d0dc70"/><ellipse cx="13" cy="14" rx="6" ry="5.5" fill="#b4c444"/><ellipse cx="14" cy="14" rx="3.0" ry="3.3" fill="#d0dc70"/><ellipse cx="1" cy="16" rx="4" ry="6" fill="#b4c444"/><ellipse cx="2" cy="16" rx="2.0" ry="3.6" fill="#d0dc70"/><ellipse cx="27" cy="13" rx="3" ry="5" fill="#b4c444"/><ellipse cx="28" cy="13" rx="1.5" ry="3.0" fill="#d0dc70"/><rect x="18" y="53" width="9" height="5" fill="#3a3a3a"/><rect x="19" y="54" width="7" height="3" fill="#8a8a8a"/></g><rect x="12" y="86" width="17" height="2.6" fill="#f4f4f4"/><rect x="13" y="89.5" width="15" height="1.6" fill="#e03040"/><rect x="13" y="91.5" width="15" height="1.6" fill="#dcefff" opacity="0.7"/></g><path d="M5 2.3h1.2v2.8H5zM7 2.3h2.6v2.8H7zM10.6 2.3h3v2.8h-3zM14.4 2.3h4.4v2.8h-4.4zM19.6 2.3h4v2.8h-4zM24.6 2.3h3.4v2.8h-3.4zM28.8 3.9h2.6v0.8h-2.6zM32 2.2h0.8v3.8H32zM37 2.2h0.8v3.4H37z" fill="#1a1a1a"/><text x="1.3" y="98.8" font-family="Liberation Sans" font-size="10.5" fill="#000" textLength="37" lengthAdjust="spacing" stroke="#000" stroke-width="0.45">Block ...</text></g>
<g transform="translate(308.91,17)"><path d="M0.7 25.3V17.6L16.4 1.2H24.6L40.5 17.6V25.3H37.8V100H3.3V25.3Z" fill="#22407c"/><path d="M3.2 23.2V18.6L17.5 4H23.5L37.9 18.6V23.2Z" fill="#16a0dc"/><rect x="3.6" y="23.2" width="33.9" height="2.4" fill="#48b6e6"/><rect x="6.2" y="25.5" width="28.6" height="73.5" fill="#16a0dc"/><path d="M4.6 21.2L17.2 7.6M23.8 7.6L36.4 21.2" stroke="#dc5664" stroke-width="3.2" stroke-dasharray="2 1"/><path d="M9 23.5H11M30 23.5H32M14.5 13V15M24.5 10.2V11.4M28.5 17V18" stroke="#f2e040" stroke-width="1"/><path d="M12.5 19V24.5M28 19V24.5" stroke="#22407c" stroke-width="0.7"/><clipPath id="c8"><rect x="0" y="0" width="27" height="59.4"/></clipPath><g transform="translate(6.8,25.6)" clip-path="url(#c8)"><rect width="28" height="60" fill="#ccc49c"/><path d="M0 0H12V14C8 20 4 26 0 28Z" fill="#98b46a"/><path d="M17 6H28V34H20Z" fill="#dcdccc"/><path d="M0 32H5V50H0Z" fill="#9ab46c"/><ellipse cx="14" cy="7" rx="3" ry="3" fill="#b0cc70"/><ellipse cx="12.5" cy="20" rx="7.5" ry="8.5" fill="#cc3452"/><ellipse cx="10.5" cy="16.5" rx="3" ry="3" fill="#e07080" opacity="0.7"/><ellipse cx="16.5" cy="37" rx="6.5" ry="7" fill="#c82c44"/><ellipse cx="9" cy="45.5" rx="6" ry="5.5" fill="#dc4456"/><ellipse cx="0.5" cy="39" rx="4" ry="5" fill="#cc3448"/><path d="M0 51C6 49 10 52 16 50S26 49 28 51V60H0Z" fill="#78a458"/><rect x="18" y="53" width="9" height="5" fill="#3a3a3a"/><rect x="19" y="54" width="7" height="3" fill="#8a8a8a"/></g><rect x="12" y="86" width="17" height="2.6" fill="#f4f4f4"/><rect x="13" y="89.5" width="15" height="1.6" fill="#e03040"/><rect x="13" y="91.5" width="15" height="1.6" fill="#dcefff" opacity="0.7"/><path d="M5 2.3h1.2v2.8H5zM7 2.3h2.6v2.8H7zM10.6 2.3h3v2.8h-3zM14.4 2.3h4.4v2.8h-4.4zM19.6 2.3h4v2.8h-4zM24.6 2.3h3.4v2.8h-3.4zM28.8 3.9h2.6v0.8h-2.6zM32 2.2h0.8v3.8H32zM37 2.2h0.8v3.4H37z" fill="#1a1a1a"/><text x="1.3" y="98.8" font-family="Liberation Sans" font-size="10.5" fill="#000" textLength="37" lengthAdjust="spacing" stroke="#000" stroke-width="0.45">Block ...</text></g>
<g transform="translate(351.04,17)"><path d="M0.7 25.3V17.6L16.4 1.2H24.6L40.5 17.6V25.3H37.8V100H3.3V25.3Z" fill="#22407c"/><path d="M3.2 23.2V18.6L17.5 4H23.5L37.9 18.6V23.2Z" fill="#16a0dc"/><rect x="3.6" y="23.2" width="33.9" height="2.4" fill="#48b6e6"/><rect x="6.2" y="25.5" width="28.6" height="73.5" fill="#16a0dc"/><path d="M4.6 21.2L17.2 7.6M23.8 7.6L36.4 21.2" stroke="#dc5664" stroke-width="3.2" stroke-dasharray="2 1"/><path d="M9 23.5H11M30 23.5H32M14.5 13V15M24.5 10.2V11.4M28.5 17V18" stroke="#f2e040" stroke-width="1"/><path d="M12.5 19V24.5M28 19V24.5" stroke="#22407c" stroke-width="0.7"/><clipPath id="c9"><rect x="0" y="0" width="27" height="59.4"/></clipPath><g transform="translate(6.8,25.6)" clip-path="url(#c9)"><rect width="28" height="60" fill="#2e4024"/><path d="M0 0H12V7H0Z" fill="#5a8a40"/><path d="M20 42H28V60H18Z" fill="#4a6a38"/><circle cx="10" cy="5" r="3.6" fill="#d81c22"/><circle cx="8.9" cy="3.9" r="0.9" fill="#ff9a90"/><circle cx="16" cy="6" r="3.6" fill="#d81c22"/><circle cx="14.9" cy="4.9" r="0.9" fill="#ff9a90"/><circle cx="22" cy="9" r="3.6" fill="#d81c22"/><circle cx="20.9" cy="7.9" r="0.9" fill="#ff9a90"/><circle cx="6" cy="12" r="3.6" fill="#d81c22"/><circle cx="4.9" cy="10.9" r="0.9" fill="#ff9a90"/><circle cx="12" cy="13" r="3.6" fill="#d81c22"/><circle cx="10.9" cy="11.9" r="0.9" fill="#ff9a90"/><circle cx="19" cy="14" r="3.6" fill="#d81c22"/><circle cx="17.9" cy="12.9" r="0.9" fill="#ff9a90"/><circle cx="25" cy="16" r="3.6" fill="#d81c22"/><circle cx="23.9" cy="14.9" r="0.9" fill="#ff9a90"/><circle cx="3" cy="20" r="3.6" fill="#d81c22"/><circle cx="1.9" cy="18.9" r="0.9" fill="#ff9a90"/><circle cx="9" cy="20" r="3.6" fill="#d81c22"/><circle cx="7.9" cy="18.9" r="0.9" fill="#ff9a90"/><circle cx="15" cy="21" r="3.6" fill="#d81c22"/><circle cx="13.9" cy="19.9" r="0.9" fill="#ff9a90"/><circle cx="22" cy="23" r="3.6" fill="#d81c22"/><circle cx="20.9" cy="21.9" r="0.9" fill="#ff9a90"/><circle cx="6" cy="27" r="3.6" fill="#d81c22"/><circle cx="4.9" cy="25.9" r="0.9" fill="#ff9a90"/><circle cx="12" cy="28" r="3.6" fill="#d81c22"/><circle cx="10.9" cy="26.9" r="0.9" fill="#ff9a90"/><circle cx="19" cy="29" r="3.6" fill="#d81c22"/><circle cx="17.9" cy="27.9" r="0.9" fill="#ff9a90"/><circle cx="25" cy="29" r="3.6" fill="#d81c22"/><circle cx="23.9" cy="27.9" r="0.9" fill="#ff9a90"/><circle cx="3" cy="34" r="3.6" fill="#d81c22"/><circle cx="1.9" cy="32.9" r="0.9" fill="#ff9a90"/><circle cx="9" cy="35" r="3.6" fill="#d81c22"/><circle cx="7.9" cy="33.9" r="0.9" fill="#ff9a90"/><circle cx="16" cy="36" r="3.6" fill="#d81c22"/><circle cx="14.9" cy="34.9" r="0.9" fill="#ff9a90"/><circle cx="22" cy="37" r="3.6" fill="#d81c22"/><circle cx="20.9" cy="35.9" r="0.9" fill="#ff9a90"/><circle cx="6" cy="42" r="3.6" fill="#d81c22"/><circle cx="4.9" cy="40.9" r="0.9" fill="#ff9a90"/><circle cx="13" cy="43" r="3.6" fill="#d81c22"/><circle cx="11.9" cy="41.9" r="0.9" fill="#ff9a90"/><circle cx="19" cy="45" r="3.6" fill="#d81c22"/><circle cx="17.9" cy="43.9" r="0.9" fill="#ff9a90"/><circle cx="10" cy="50" r="3.6" fill="#d81c22"/><circle cx="8.9" cy="48.9" r="0.9" fill="#ff9a90"/><circle cx="16" cy="52" r="3.6" fill="#d81c22"/><circle cx="14.9" cy="50.9" r="0.9" fill="#ff9a90"/><circle cx="4" cy="49" r="3.6" fill="#d81c22"/><circle cx="2.9" cy="47.9" r="0.9" fill="#ff9a90"/><circle cx="13" cy="57" r="3.6" fill="#d81c22"/><circle cx="11.9" cy="55.9" r="0.9" fill="#ff9a90"/><circle cx="1" cy="27" r="3.6" fill="#d81c22"/><circle cx="-0.10000000000000009" cy="25.9" r="0.9" fill="#ff9a90"/><circle cx="26" cy="23" r="3.6" fill="#d81c22"/><circle cx="24.9" cy="21.9" r="0.9" fill="#ff9a90"/><rect x="18" y="53" width="9" height="5" fill="#3a3a3a"/><rect x="19" y="54" width="7" height="3" fill="#8a8a8a"/></g><rect x="12" y="86" width="17" height="2.6" fill="#f4f4f4"/><rect x="13" y="89.5" width="15" height="1.6" fill="#e03040"/><rect x="13" y="91.5" width="15" height="1.6" fill="#dcefff" opacity="0.7"/><path d="M5 2.3h1.2v2.8H5zM7 2.3h2.6v2.8H7zM10.6 2.3h3v2.8h-3zM14.4 2.3h4.4v2.8h-4.4zM19.6 2.3h4v2.8h-4zM24.6 2.3h3.4v2.8h-3.4zM28.8 3.9h2.6v0.8h-2.6zM32 2.2h0.8v3.8H32zM37 2.2h0.8v3.4H37z" fill="#1a1a1a"/><text x="1.3" y="98.8" font-family="Liberation Sans" font-size="10.5" fill="#000" textLength="37" lengthAdjust="spacing" stroke="#000" stroke-width="0.45">Block ...</text></g>
<g transform="translate(393.17,17)"><path d="M0.7 25.3V17.6L16.4 1.2H24.6L40.5 17.6V25.3H37.8V100H3.3V25.3Z" fill="#22407c"/><path d="M3.2 23.2V18.6L17.5 4H23.5L37.9 18.6V23.2Z" fill="#16a0dc"/><rect x="3.6" y="23.2" width="33.9" height="2.4" fill="#48b6e6"/><rect x="6.2" y="25.5" width="28.6" height="73.5" fill="#16a0dc"/><path d="M4.6 21.2L17.2 7.6M23.8 7.6L36.4 21.2" stroke="#dc5664" stroke-width="3.2" stroke-dasharray="2 1"/><path d="M9 23.5H11M30 23.5H32M14.5 13V15M24.5 10.2V11.4M28.5 17V18" stroke="#f2e040" stroke-width="1"/><path d="M12.5 19V24.5M28 19V24.5" stroke="#22407c" stroke-width="0.7"/><clipPath id="c10"><rect x="0" y="0" width="27" height="59.4"/></clipPath><g transform="translate(6.8,25.6)" clip-path="url(#c10)"><rect width="28" height="60" fill="#7c9e70"/><path d="M0 0H20V10H0Z" fill="#4a5a40"/><path d="M16 0H28V28H22Z" fill="#8aae7c"/><ellipse cx="3" cy="28" rx="5" ry="10" fill="#a03454"/><ellipse cx="15" cy="33" rx="6.5" ry="10" fill="#8e3c5e"/><ellipse cx="25" cy="18" rx="4" ry="8" fill="#e46640"/><ellipse cx="23" cy="46" rx="5.5" ry="7" fill="#b43a5a"/><path d="M0 52H28V60H0Z" fill="#96ba88"/><rect x="18" y="53" width="9" height="5" fill="#3a3a3a"/><rect x="19" y="54" width="7" height="3" fill="#8a8a8a"/></g><rect x="12" y="86" width="17" height="2.6" fill="#f4f4f4"/><rect x="13" y="89.5" width="15" height="1.6" fill="#e03040"/><rect x="13" y="91.5" width="15" height="1.6" fill="#dcefff" opacity="0.7"/><path d="M5 2.3h1.2v2.8H5zM7 2.3h2.6v2.8H7zM10.6 2.3h3v2.8h-3zM14.4 2.3h4.4v2.8h-4.4zM19.6 2.3h4v2.8h-4zM24.6 2.3h3.4v2.8h-3.4zM28.8 3.9h2.6v0.8h-2.6zM32 2.2h0.8v3.8H32zM37 2.2h0.8v3.4H37z" fill="#1a1a1a"/><text x="1.3" y="98.8" font-family="Liberation Sans" font-size="10.5" fill="#000" textLength="37" lengthAdjust="spacing" stroke="#000" stroke-width="0.45">Block ...</text></g>
<g transform="translate(14.00,117)"><path d="M0.7 25.3V17.6L16.4 1.2H24.6L40.5 17.6V25.3H37.8V100H3.3V25.3Z" fill="#22407c"/><path d="M3.2 23.2V18.6L17.5 4H23.5L37.9 18.6V23.2Z" fill="#16a0dc"/><rect x="3.6" y="23.2" width="33.9" height="2.4" fill="#48b6e6"/><rect x="6.2" y="25.5" width="28.6" height="73.5" fill="#16a0dc"/><path d="M4.6 21.2L17.2 7.6M23.8 7.6L36.4 21.2" stroke="#dc5664" stroke-width="3.2" stroke-dasharray="2 1"/><path d="M9 23.5H11M30 23.5H32M14.5 13V15M24.5 10.2V11.4M28.5 17V18" stroke="#f2e040" stroke-width="1"/><path d="M12.5 19V24.5M28 19V24.5" stroke="#22407c" stroke-width="0.7"/><clipPath id="c11"><rect x="0" y="0" width="27" height="59.4"/></clipPath><g transform="translate(6.8,25.6)" clip-path="url(#c11)"><rect width="28" height="60" fill="#3e7a2c"/><rect width="28" height="26" fill="#a86c3c"/><path d="M4 0H22C18 4 10 6 4 6Z" fill="#ecebf0"/><rect x="20" y="0" width="8" height="5" fill="#8cb050"/><rect x="1" y="0" width="3" height="14" fill="#6a3e1c"/><ellipse cx="14" cy="32" rx="18" ry="17" fill="#8cb834"/><ellipse cx="12" cy="31" rx="10" ry="9" fill="#a6c04c"/><ellipse cx="11" cy="30.5" rx="7.5" ry="6" fill="#4e4a26" opacity="0.6"/><path d="M5 30C6 27 10 26 13 27S17 29 16 31S12 34 9 33S4 32 5 30Z" fill="#f4ecb8"/><rect x="18" y="53" width="9" height="5" fill="#3a3a3a"/><rect x="19" y="54" width="7" height="3" fill="#8a8a8a"/></g><rect x="12" y="86" width="17" height="2.6" fill="#f4f4f4"/><rect x="13" y="89.5" width="15" height="1.6" fill="#e03040"/><rect x="13" y="91.5" width="15" height="1.6" fill="#dcefff" opacity="0.7"/><path d="M5 2.3h1.2v2.8H5zM7 2.3h2.6v2.8H7zM10.6 2.3h3v2.8h-3zM14.4 2.3h4.4v2.8h-4.4zM19.6 2.3h4v2.8h-4zM24.6 2.3h3.4v2.8h-3.4zM28.8 3.9h2.6v0.8h-2.6zM32 2.2h0.8v3.8H32zM37 2.2h0.8v3.4H37z" fill="#1a1a1a"/><text x="1.3" y="98.8" font-family="Liberation Sans" font-size="10.5" fill="#000" textLength="37" lengthAdjust="spacing" stroke="#000" stroke-width="0.45">Block ...</text></g>
<g transform="translate(56.13,117)"><path d="M0.7 25.3V17.6L16.4 1.2H24.6L40.5 17.6V25.3H37.8V100H3.3V25.3Z" fill="#22407c"/><path d="M3.2 23.2V18.6L17.5 4H23.5L37.9 18.6V23.2Z" fill="#16a0dc"/><rect x="3.6" y="23.2" width="33.9" height="2.4" fill="#48b6e6"/><rect x="6.2" y="25.5" width="28.6" height="73.5" fill="#16a0dc"/><path d="M4.6 21.2L17.2 7.6M23.8 7.6L36.4 21.2" stroke="#dc5664" stroke-width="3.2" stroke-dasharray="2 1"/><path d="M9 23.5H11M30 23.5H32M14.5 13V15M24.5 10.2V11.4M28.5 17V18" stroke="#f2e040" stroke-width="1"/><path d="M12.5 19V24.5M28 19V24.5" stroke="#22407c" stroke-width="0.7"/><clipPath id="c12"><rect x="0" y="0" width="27" height="59.4"/></clipPath><g transform="translate(6.8,25.6)" clip-path="url(#c12)"><rect width="28" height="60" fill="#3e7a2c"/><rect width="28" height="26" fill="#a86c3c"/><path d="M4 0H22C18 4 10 6 4 6Z" fill="#ecebf0"/><rect x="20" y="0" width="8" height="5" fill="#8cb050"/><rect x="1" y="0" width="3" height="14" fill="#6a3e1c"/><ellipse cx="14" cy="32" rx="18" ry="17" fill="#8cb834"/><ellipse cx="12" cy="31" rx="10" ry="9" fill="#a6c04c"/><ellipse cx="11" cy="30.5" rx="7.5" ry="6" fill="#4e4a26" opacity="0.6"/><path d="M5 30C6 27 10 26 13 27S17 29 16 31S12 34 9 33S4 32 5 30Z" fill="#f4ecb8"/><rect x="18" y="53" width="9" height="5" fill="#3a3a3a"/><rect x="19" y="54" width="7" height="3" fill="#8a8a8a"/></g><rect x="12" y="86" width="17" height="2.6" fill="#f4f4f4"/><rect x="13" y="89.5" width="15" height="1.6" fill="#e03040"/><rect x="13" y="91.5" width="15" height="1.6" fill="#dcefff" opacity="0.7"/><path d="M5 2.3h1.2v2.8H5zM7 2.3h2.6v2.8H7zM10.6 2.3h3v2.8h-3zM14.4 2.3h4.4v2.8h-4.4zM19.6 2.3h4v2.8h-4zM24.6 2.3h3.4v2.8h-3.4zM28.8 3.9h2.6v0.8h-2.6zM32 2.2h0.8v3.8H32zM37 2.2h0.8v3.4H37z" fill="#1a1a1a"/><text x="1.3" y="98.8" font-family="Liberation Sans" font-size="10.5" fill="#000" textLength="37" lengthAdjust="spacing" stroke="#000" stroke-width="0.45">Block ...</text></g>
<g transform="translate(98.26,117)"><path d="M0.7 25.3V17.6L16.4 1.2H24.6L40.5 17.6V25.3H37.8V100H3.3V25.3Z" fill="#22407c"/><path d="M3.2 23.2V18.6L17.5 4H23.5L37.9 18.6V23.2Z" fill="#16a0dc"/><rect x="3.6" y="23.2" width="33.9" height="2.4" fill="#48b6e6"/><rect x="6.2" y="25.5" width="28.6" height="73.5" fill="#16a0dc"/><path d="M4.6 21.2L17.2 7.6M23.8 7.6L36.4 21.2" stroke="#dc5664" stroke-width="3.2" stroke-dasharray="2 1"/><path d="M9 23.5H11M30 23.5H32M14.5 13V15M24.5 10.2V11.4M28.5 17V18" stroke="#f2e040" stroke-width="1"/><path d="M12.5 19V24.5M28 19V24.5" stroke="#22407c" stroke-width="0.7"/><clipPath id="c13"><rect x="0" y="0" width="27" height="59.4"/></clipPath><g transform="translate(6.8,25.6)" clip-path="url(#c13)"><rect width="28" height="60" fill="#3e7a2c"/><rect width="28" height="26" fill="#a86c3c"/><path d="M4 0H22C18 4 10 6 4 6Z" fill="#ecebf0"/><rect x="20" y="0" width="8" height="5" fill="#8cb050"/><rect x="1" y="0" width="3" height="14" fill="#6a3e1c"/><ellipse cx="14" cy="32" rx="18" ry="17" fill="#8cb834"/><ellipse cx="12" cy="31" rx="10" ry="9" fill="#a6c04c"/><ellipse cx="11" cy="30.5" rx="7.5" ry="6" fill="#4e4a26" opacity="0.6"/><path d="M5 30C6 27 10 26 13 27S17 29 16 31S12 34 9 33S4 32 5 30Z" fill="#f4ecb8"/><rect x="18" y="53" width="9" height="5" fill="#3a3a3a"/><rect x="19" y="54" width="7" height="3" fill="#8a8a8a"/></g><rect x="12" y="86" width="17" height="2.6" fill="#f4f4f4"/><rect x="13" y="89.5" width="15" height="1.6" fill="#e03040"/><rect x="13" y="91.5" width="15" height="1.6" fill="#dcefff" opacity="0.7"/><path d="M5 2.3h1.2v2.8H5zM7 2.3h2.6v2.8H7zM10.6 2.3h3v2.8h-3zM14.4 2.3h4.4v2.8h-4.4zM19.6 2.3h4v2.8h-4zM24.6 2.3h3.4v2.8h-3.4zM28.8 3.9h2.6v0.8h-2.6zM32 2.2h0.8v3.8H32zM37 2.2h0.8v3.4H37z" fill="#1a1a1a"/><text x="1.3" y="98.8" font-family="Liberation Sans" font-size="10.5" fill="#000" textLength="37" lengthAdjust="spacing" stroke="#000" stroke-width="0.45">Block ...</text></g>
<g transform="translate(140.39,117)"><path d="M0.7 25.3V17.6L16.4 1.2H24.6L40.5 17.6V25.3H37.8V100H3.3V25.3Z" fill="#22407c"/><path d="M3.2 23.2V18.6L17.5 4H23.5L37.9 18.6V23.2Z" fill="#16a0dc"/><rect x="3.6" y="23.2" width="33.9" height="2.4" fill="#48b6e6"/><rect x="6.2" y="25.5" width="28.6" height="73.5" fill="#16a0dc"/><path d="M4.6 21.2L17.2 7.6M23.8 7.6L36.4 21.2" stroke="#dc5664" stroke-width="3.2" stroke-dasharray="2 1"/><path d="M9 23.5H11M30 23.5H32M14.5 13V15M24.5 10.2V11.4M28.5 17V18" stroke="#f2e040" stroke-width="1"/><path d="M12.5 19V24.5M28 19V24.5" stroke="#22407c" stroke-width="0.7"/><clipPath id="c14"><rect x="0" y="0" width="27" height="59.4"/></clipPath><g transform="translate(6.8,25.6)" clip-path="url(#c14)"><rect width="28" height="60" fill="#3e7a2c"/><rect width="28" height="26" fill="#a86c3c"/><path d="M4 0H22C18 4 10 6 4 6Z" fill="#ecebf0"/><rect x="20" y="0" width="8" height="5" fill="#8cb050"/><rect x="1" y="0" width="3" height="14" fill="#6a3e1c"/><ellipse cx="14" cy="32" rx="18" ry="17" fill="#8cb834"/><ellipse cx="12" cy="31" rx="10" ry="9" fill="#a6c04c"/><ellipse cx="11" cy="30.5" rx="7.5" ry="6" fill="#4e4a26" opacity="0.6"/><path d="M5 30C6 27 10 26 13 27S17 29 16 31S12 34 9 33S4 32 5 30Z" fill="#f4ecb8"/><rect x="18" y="53" width="9" height="5" fill="#3a3a3a"/><rect x="19" y="54" width="7" height="3" fill="#8a8a8a"/></g><rect x="12" y="86" width="17" height="2.6" fill="#f4f4f4"/><rect x="13" y="89.5" width="15" height="1.6" fill="#e03040"/><rect x="13" y="91.5" width="15" height="1.6" fill="#dcefff" opacity="0.7"/><path d="M5 2.3h1.2v2.8H5zM7 2.3h2.6v2.8H7zM10.6 2.3h3v2.8h-3zM14.4 2.3h4.4v2.8h-4.4zM19.6 2.3h4v2.8h-4zM24.6 2.3h3.4v2.8h-3.4zM28.8 3.9h2.6v0.8h-2.6zM32 2.2h0.8v3.8H32zM37 2.2h0.8v3.4H37z" fill="#1a1a1a"/><text x="1.3" y="98.8" font-family="Liberation Sans" font-size="10.5" fill="#000" textLength="37" lengthAdjust="spacing" stroke="#000" stroke-width="0.45">Block ...</text></g>
<g transform="translate(182.52,117)"><path d="M0.7 25.3V17.6L16.4 1.2H24.6L40.5 17.6V25.3H37.8V100H3.3V25.3Z" fill="#22407c"/><path d="M3.2 23.2V18.6L17.5 4H23.5L37.9 18.6V23.2Z" fill="#16a0dc"/><rect x="3.6" y="23.2" width="33.9" height="2.4" fill="#48b6e6"/><rect x="6.2" y="25.5" width="28.6" height="73.5" fill="#16a0dc"/><path d="M4.6 21.2L17.2 7.6M23.8 7.6L36.4 21.2" stroke="#dc5664" stroke-width="3.2" stroke-dasharray="2 1"/><path d="M9 23.5H11M30 23.5H32M14.5 13V15M24.5 10.2V11.4M28.5 17V18" stroke="#f2e040" stroke-width="1"/><path d="M12.5 19V24.5M28 19V24.5" stroke="#22407c" stroke-width="0.7"/><clipPath id="c15"><rect x="0" y="0" width="27" height="59.4"/></clipPath><g transform="translate(6.8,25.6)" clip-path="url(#c15)"><rect width="28" height="60" fill="#2a2c34"/><rect width="5" height="60" fill="#4e8a46"/><rect x="19" y="3" width="9" height="12" fill="#6a2c3a"/><rect y="47" width="28" height="13" fill="#5e9c4c"/><circle cx="8" cy="4" r="3.9" fill="#181a28"/><circle cx="6.8" cy="2.8" r="1" fill="#7a88a8"/><circle cx="15" cy="5" r="4.1" fill="#181a28"/><circle cx="13.8" cy="3.8" r="1" fill="#7a88a8"/><circle cx="23" cy="20" r="3.2" fill="#181a28"/><circle cx="21.8" cy="18.8" r="1" fill="#7a88a8"/><circle cx="6" cy="11" r="4.1" fill="#181a28"/><circle cx="4.8" cy="9.8" r="1" fill="#7a88a8"/><circle cx="13" cy="13" r="4.0" fill="#181a28"/><circle cx="11.8" cy="11.8" r="1" fill="#7a88a8"/><circle cx="20" cy="27" r="3.3" fill="#181a28"/><circle cx="18.8" cy="25.8" r="1" fill="#7a88a8"/><circle cx="9" cy="20" r="4.0" fill="#181a28"/><circle cx="7.8" cy="18.8" r="1" fill="#7a88a8"/><circle cx="16" cy="21" r="4.0" fill="#181a28"/><circle cx="14.8" cy="19.8" r="1" fill="#7a88a8"/><circle cx="4" cy="27" r="3.4" fill="#181a28"/><circle cx="2.8" cy="25.8" r="1" fill="#7a88a8"/><circle cx="11" cy="28" r="4.2" fill="#181a28"/><circle cx="9.8" cy="26.8" r="1" fill="#7a88a8"/><circle cx="17" cy="34" r="3.6" fill="#181a28"/><circle cx="15.8" cy="32.8" r="1" fill="#7a88a8"/><circle cx="24" cy="35" r="3.7" fill="#181a28"/><circle cx="22.8" cy="33.8" r="1" fill="#7a88a8"/><circle cx="6" cy="35" r="3.9" fill="#181a28"/><circle cx="4.8" cy="33.8" r="1" fill="#7a88a8"/><circle cx="12" cy="41" r="3.9" fill="#181a28"/><circle cx="10.8" cy="39.8" r="1" fill="#7a88a8"/><circle cx="20" cy="42" r="3.9" fill="#181a28"/><circle cx="18.8" cy="40.8" r="1" fill="#7a88a8"/><circle cx="8" cy="48" r="3.5" fill="#181a28"/><circle cx="6.8" cy="46.8" r="1" fill="#7a88a8"/><circle cx="16" cy="50" r="3.7" fill="#181a28"/><circle cx="14.8" cy="48.8" r="1" fill="#7a88a8"/><circle cx="23" cy="50" r="3.3" fill="#181a28"/><circle cx="21.8" cy="48.8" r="1" fill="#7a88a8"/><circle cx="3" cy="43" r="3.5" fill="#181a28"/><circle cx="1.8" cy="41.8" r="1" fill="#7a88a8"/><circle cx="25" cy="10" r="3.7" fill="#181a28"/><circle cx="23.8" cy="8.8" r="1" fill="#7a88a8"/><rect x="18" y="53" width="9" height="5" fill="#3a3a3a"/><rect x="19" y="54" width="7" height="3" fill="#8a8a8a"/></g><rect x="12" y="86" width="17" height="2.6" fill="#f4f4f4"/><rect x="13" y="89.5" width="15" height="1.6" fill="#e03040"/><rect x="13" y="91.5" width="15" height="1.6" fill="#dcefff" opacity="0.7"/><path d="M5 2.3h1.2v2.8H5zM7 2.3h2.6v2.8H7zM10.6 2.3h3v2.8h-3zM14.4 2.3h4.4v2.8h-4.4zM19.6 2.3h4v2.8h-4zM24.6 2.3h3.4v2.8h-3.4zM28.8 3.9h2.6v0.8h-2.6zM32 2.2h0.8v3.8H32zM37 2.2h0.8v3.4H37z" fill="#1a1a1a"/><text x="1.3" y="98.8" font-family="Liberation Sans" font-size="10.5" fill="#000" textLength="37" lengthAdjust="spacing" stroke="#000" stroke-width="0.45">Block ...</text></g>
<g transform="translate(224.65,117)"><path d="M0.7 25.3V17.6L16.4 1.2H24.6L40.5 17.6V25.3H37.8V100H3.3V25.3Z" fill="#22407c"/><path d="M3.2 23.2V18.6L17.5 4H23.5L37.9 18.6V23.2Z" fill="#16a0dc"/><rect x="3.6" y="23.2" width="33.9" height="2.4" fill="#48b6e6"/><rect x="6.2" y="25.5" width="28.6" height="73.5" fill="#16a0dc"/><path d="M4.6 21.2L17.2 7.6M23.8 7.6L36.4 21.2" stroke="#dc5664" stroke-width="3.2" stroke-dasharray="2 1"/><path d="M9 23.5H11M30 23.5H32M14.5 13V15M24.5 10.2V11.4M28.5 17V18" stroke="#f2e040" stroke-width="1"/><path d="M12.5 19V24.5M28 19V24.5" stroke="#22407c" stroke-width="0.7"/><clipPath id="c16"><rect x="0" y="0" width="27" height="59.4"/></clipPath><g transform="translate(6.8,25.6)" clip-path="url(#c16)"><rect width="28" height="60" fill="#2a2c34"/><rect width="5" height="60" fill="#4e8a46"/><rect x="19" y="3" width="9" height="12" fill="#6a2c3a"/><rect y="47" width="28" height="13" fill="#5e9c4c"/><circle cx="8" cy="4" r="3.2" fill="#181a28"/><circle cx="6.8" cy="2.8" r="1" fill="#7a88a8"/><circle cx="15" cy="5" r="4.1" fill="#181a28"/><circle cx="13.8" cy="3.8" r="1" fill="#7a88a8"/><circle cx="23" cy="20" r="3.9" fill="#181a28"/><circle cx="21.8" cy="18.8" r="1" fill="#7a88a8"/><circle cx="6" cy="11" r="3.2" fill="#181a28"/><circle cx="4.8" cy="9.8" r="1" fill="#7a88a8"/><circle cx="13" cy="13" r="3.7" fill="#181a28"/><circle cx="11.8" cy="11.8" r="1" fill="#7a88a8"/><circle cx="20" cy="27" r="3.4" fill="#181a28"/><circle cx="18.8" cy="25.8" r="1" fill="#7a88a8"/><circle cx="9" cy="20" r="4.1" fill="#181a28"/><circle cx="7.8" cy="18.8" r="1" fill="#7a88a8"/><circle cx="16" cy="21" r="4.1" fill="#181a28"/><circle cx="14.8" cy="19.8" r="1" fill="#7a88a8"/><circle cx="4" cy="27" r="3.5" fill="#181a28"/><circle cx="2.8" cy="25.8" r="1" fill="#7a88a8"/><circle cx="11" cy="28" r="3.8" fill="#181a28"/><circle cx="9.8" cy="26.8" r="1" fill="#7a88a8"/><circle cx="17" cy="34" r="3.7" fill="#181a28"/><circle cx="15.8" cy="32.8" r="1" fill="#7a88a8"/><circle cx="24" cy="35" r="3.5" fill="#181a28"/><circle cx="22.8" cy="33.8" r="1" fill="#7a88a8"/><circle cx="6" cy="35" r="3.6" fill="#181a28"/><circle cx="4.8" cy="33.8" r="1" fill="#7a88a8"/><circle cx="12" cy="41" r="3.6" fill="#181a28"/><circle cx="10.8" cy="39.8" r="1" fill="#7a88a8"/><circle cx="20" cy="42" r="3.7" fill="#181a28"/><circle cx="18.8" cy="40.8" r="1" fill="#7a88a8"/><circle cx="8" cy="48" r="4.2" fill="#181a28"/><circle cx="6.8" cy="46.8" r="1" fill="#7a88a8"/><circle cx="16" cy="50" r="3.9" fill="#181a28"/><circle cx="14.8" cy="48.8" r="1" fill="#7a88a8"/><circle cx="23" cy="50" r="3.2" fill="#181a28"/><circle cx="21.8" cy="48.8" r="1" fill="#7a88a8"/><circle cx="3" cy="43" r="3.6" fill="#181a28"/><circle cx="1.8" cy="41.8" r="1" fill="#7a88a8"/><circle cx="25" cy="10" r="4.2" fill="#181a28"/><circle cx="23.8" cy="8.8" r="1" fill="#7a88a8"/><rect x="18" y="53" width="9" height="5" fill="#3a3a3a"/><rect x="19" y="54" width="7" height="3" fill="#8a8a8a"/></g><rect x="12" y="86" width="17" height="2.6" fill="#f4f4f4"/><rect x="13" y="89.5" width="15" height="1.6" fill="#e03040"/><rect x="13" y="91.5" width="15" height="1.6" fill="#dcefff" opacity="0.7"/><path d="M5 2.3h1.2v2.8H5zM7 2.3h2.6v2.8H7zM10.6 2.3h3v2.8h-3zM14.4 2.3h4.4v2.8h-4.4zM19.6 2.3h4v2.8h-4zM24.6 2.3h3.4v2.8h-3.4zM28.8 3.9h2.6v0.8h-2.6zM32 2.2h0.8v3.8H32zM37 2.2h0.8v3.4H37z" fill="#1a1a1a"/><text x="1.3" y="98.8" font-family="Liberation Sans" font-size="10.5" fill="#000" textLength="37" lengthAdjust="spacing" stroke="#000" stroke-width="0.45">Block ...</text></g>
<g transform="translate(266.78,117)"><path d="M0.7 25.3V17.6L16.4 1.2H24.6L40.5 17.6V25.3H37.8V100H3.3V25.3Z" fill="#22407c"/><path d="M3.2 23.2V18.6L17.5 4H23.5L37.9 18.6V23.2Z" fill="#16a0dc"/><rect x="3.6" y="23.2" width="33.9" height="2.4" fill="#48b6e6"/><rect x="6.2" y="25.5" width="28.6" height="73.5" fill="#16a0dc"/><path d="M4.6 21.2L17.2 7.6M23.8 7.6L36.4 21.2" stroke="#dc5664" stroke-width="3.2" stroke-dasharray="2 1"/><path d="M9 23.5H11M30 23.5H32M14.5 13V15M24.5 10.2V11.4M28.5 17V18" stroke="#f2e040" stroke-width="1"/><path d="M12.5 19V24.5M28 19V24.5" stroke="#22407c" stroke-width="0.7"/><clipPath id="c17"><rect x="0" y="0" width="27" height="59.4"/></clipPath><g transform="translate(6.8,25.6)" clip-path="url(#c17)"><rect width="28" height="60" fill="#2a2c34"/><rect width="5" height="60" fill="#4e8a46"/><rect x="19" y="3" width="9" height="12" fill="#6a2c3a"/><rect y="47" width="28" height="13" fill="#5e9c4c"/><circle cx="8" cy="4" r="3.7" fill="#181a28"/><circle cx="6.8" cy="2.8" r="1" fill="#7a88a8"/><circle cx="15" cy="5" r="3.4" fill="#181a28"/><circle cx="13.8" cy="3.8" r="1" fill="#7a88a8"/><circle cx="23" cy="20" r="4.2" fill="#181a28"/><circle cx="21.8" cy="18.8" r="1" fill="#7a88a8"/><circle cx="6" cy="11" r="3.8" fill="#181a28"/><circle cx="4.8" cy="9.8" r="1" fill="#7a88a8"/><circle cx="13" cy="13" r="3.8" fill="#181a28"/><circle cx="11.8" cy="11.8" r="1" fill="#7a88a8"/><circle cx="20" cy="27" r="4.1" fill="#181a28"/><circle cx="18.8" cy="25.8" r="1" fill="#7a88a8"/><circle cx="9" cy="20" r="3.3" fill="#181a28"/><circle cx="7.8" cy="18.8" r="1" fill="#7a88a8"/><circle cx="16" cy="21" r="4.0" fill="#181a28"/><circle cx="14.8" cy="19.8" r="1" fill="#7a88a8"/><circle cx="4" cy="27" r="3.4" fill="#181a28"/><circle cx="2.8" cy="25.8" r="1" fill="#7a88a8"/><circle cx="11" cy="28" r="3.5" fill="#181a28"/><circle cx="9.8" cy="26.8" r="1" fill="#7a88a8"/><circle cx="17" cy="34" r="3.5" fill="#181a28"/><circle cx="15.8" cy="32.8" r="1" fill="#7a88a8"/><circle cx="24" cy="35" r="3.9" fill="#181a28"/><circle cx="22.8" cy="33.8" r="1" fill="#7a88a8"/><circle cx="6" cy="35" r="4.1" fill="#181a28"/><circle cx="4.8" cy="33.8" r="1" fill="#7a88a8"/><circle cx="12" cy="41" r="3.9" fill="#181a28"/><circle cx="10.8" cy="39.8" r="1" fill="#7a88a8"/><circle cx="20" cy="42" r="3.5" fill="#181a28"/><circle cx="18.8" cy="40.8" r="1" fill="#7a88a8"/><circle cx="8" cy="48" r="3.3" fill="#181a28"/><circle cx="6.8" cy="46.8" r="1" fill="#7a88a8"/><circle cx="16" cy="50" r="3.5" fill="#181a28"/><circle cx="14.8" cy="48.8" r="1" fill="#7a88a8"/><circle cx="23" cy="50" r="3.4" fill="#181a28"/><circle cx="21.8" cy="48.8" r="1" fill="#7a88a8"/><circle cx="3" cy="43" r="3.7" fill="#181a28"/><circle cx="1.8" cy="41.8" r="1" fill="#7a88a8"/><circle cx="25" cy="10" r="3.7" fill="#181a28"/><circle cx="23.8" cy="8.8" r="1" fill="#7a88a8"/><rect x="18" y="53" width="9" height="5" fill="#3a3a3a"/><rect x="19" y="54" width="7" height="3" fill="#8a8a8a"/></g><rect x="12" y="86" width="17" height="2.6" fill="#f4f4f4"/><rect x="13" y="89.5" width="15" height="1.6" fill="#e03040"/><rect x="13" y="91.5" width="15" height="1.6" fill="#dcefff" opacity="0.7"/><path d="M5 2.3h1.2v2.8H5zM7 2.3h2.6v2.8H7zM10.6 2.3h3v2.8h-3zM14.4 2.3h4.4v2.8h-4.4zM19.6 2.3h4v2.8h-4zM24.6 2.3h3.4v2.8h-3.4zM28.8 3.9h2.6v0.8h-2.6zM32 2.2h0.8v3.8H32zM37 2.2h0.8v3.4H37z" fill="#1a1a1a"/><text x="1.3" y="98.8" font-family="Liberation Sans" font-size="10.5" fill="#000" textLength="37" lengthAdjust="spacing" stroke="#000" stroke-width="0.45">Block ...</text></g>
<g transform="translate(308.91,117)"><path d="M0.7 25.3V17.6L16.4 1.2H24.6L40.5 17.6V25.3H37.8V100H3.3V25.3Z" fill="#22407c"/><path d="M3.2 23.2V18.6L17.5 4H23.5L37.9 18.6V23.2Z" fill="#16a0dc"/><rect x="3.6" y="23.2" width="33.9" height="2.4" fill="#48b6e6"/><rect x="6.2" y="25.5" width="28.6" height="73.5" fill="#16a0dc"/><path d="M4.6 21.2L17.2 7.6M23.8 7.6L36.4 21.2" stroke="#dc5664" stroke-width="3.2" stroke-dasharray="2 1"/><path d="M9 23.5H11M30 23.5H32M14.5 13V15M24.5 10.2V11.4M28.5 17V18" stroke="#f2e040" stroke-width="1"/><path d="M12.5 19V24.5M28 19V24.5" stroke="#22407c" stroke-width="0.7"/><clipPath id="c18"><rect x="0" y="0" width="27" height="59.4"/></clipPath><g transform="translate(6.8,25.6)" clip-path="url(#c18)"><rect width="28" height="60" fill="#2a2c34"/><rect width="5" height="60" fill="#4e8a46"/><rect x="19" y="3" width="9" height="12" fill="#6a2c3a"/><rect y="47" width="28" height="13" fill="#5e9c4c"/><circle cx="8" cy="4" r="3.2" fill="#181a28"/><circle cx="6.8" cy="2.8" r="1" fill="#7a88a8"/><circle cx="15" cy="5" r="3.8" fill="#181a28"/><circle cx="13.8" cy="3.8" r="1" fill="#7a88a8"/><circle cx="23" cy="20" r="3.8" fill="#181a28"/><circle cx="21.8" cy="18.8" r="1" fill="#7a88a8"/><circle cx="6" cy="11" r="3.3" fill="#181a28"/><circle cx="4.8" cy="9.8" r="1" fill="#7a88a8"/><circle cx="13" cy="13" r="3.2" fill="#181a28"/><circle cx="11.8" cy="11.8" r="1" fill="#7a88a8"/><circle cx="20" cy="27" r="4.1" fill="#181a28"/><circle cx="18.8" cy="25.8" r="1" fill="#7a88a8"/><circle cx="9" cy="20" r="3.6" fill="#181a28"/><circle cx="7.8" cy="18.8" r="1" fill="#7a88a8"/><circle cx="16" cy="21" r="3.5" fill="#181a28"/><circle cx="14.8" cy="19.8" r="1" fill="#7a88a8"/><circle cx="4" cy="27" r="3.9" fill="#181a28"/><circle cx="2.8" cy="25.8" r="1" fill="#7a88a8"/><circle cx="11" cy="28" r="4.1" fill="#181a28"/><circle cx="9.8" cy="26.8" r="1" fill="#7a88a8"/><circle cx="17" cy="34" r="3.5" fill="#181a28"/><circle cx="15.8" cy="32.8" r="1" fill="#7a88a8"/><circle cx="24" cy="35" r="4.2" fill="#181a28"/><circle cx="22.8" cy="33.8" r="1" fill="#7a88a8"/><circle cx="6" cy="35" r="3.5" fill="#181a28"/><circle cx="4.8" cy="33.8" r="1" fill="#7a88a8"/><circle cx="12" cy="41" r="4.2" fill="#181a28"/><circle cx="10.8" cy="39.8" r="1" fill="#7a88a8"/><circle cx="20" cy="42" r="3.9" fill="#181a28"/><circle cx="18.8" cy="40.8" r="1" fill="#7a88a8"/><circle cx="8" cy="48" r="3.3" fill="#181a28"/><circle cx="6.8" cy="46.8" r="1" fill="#7a88a8"/><circle cx="16" cy="50" r="4.1" fill="#181a28"/><circle cx="14.8" cy="48.8" r="1" fill="#7a88a8"/><circle cx="23" cy="50" r="3.3" fill="#181a28"/><circle cx="21.8" cy="48.8" r="1" fill="#7a88a8"/><circle cx="3" cy="43" r="3.3" fill="#181a28"/><circle cx="1.8" cy="41.8" r="1" fill="#7a88a8"/><circle cx="25" cy="10" r="3.8" fill="#181a28"/><circle cx="23.8" cy="8.8" r="1" fill="#7a88a8"/><rect x="18" y="53" width="9" height="5" fill="#3a3a3a"/><rect x="19" y="54" width="7" height="3" fill="#8a8a8a"/></g><rect x="12" y="86" width="17" height="2.6" fill="#f4f4f4"/><rect x="13" y="89.5" width="15" height="1.6" fill="#e03040"/><rect x="13" y="91.5" width="15" height="1.6" fill="#dcefff" opacity="0.7"/><path d="M5 2.3h1.2v2.8H5zM7 2.3h2.6v2.8H7zM10.6 2.3h3v2.8h-3zM14.4 2.3h4.4v2.8h-4.4zM19.6 2.3h4v2.8h-4zM24.6 2.3h3.4v2.8h-3.4zM28.8 3.9h2.6v0.8h-2.6zM32 2.2h0.8v3.8H32zM37 2.2h0.8v3.4H37z" fill="#1a1a1a"/><text x="1.3" y="98.8" font-family="Liberation Sans" font-size="10.5" fill="#000" textLength="37" lengthAdjust="spacing" stroke="#000" stroke-width="0.45">Block ...</text></g>
<g transform="translate(351.04,117)"><path d="M0.7 25.3V17.6L16.4 1.2H24.6L40.5 17.6V25.3H37.8V100H3.3V25.3Z" fill="#22407c"/><path d="M3.2 23.2V18.6L17.5 4H23.5L37.9 18.6V23.2Z" fill="#16a0dc"/><rect x="3.6" y="23.2" width="33.9" height="2.4" fill="#48b6e6"/><rect x="6.2" y="25.5" width="28.6" height="73.5" fill="#16a0dc"/><path d="M4.6 21.2L17.2 7.6M23.8 7.6L36.4 21.2" stroke="#dc5664" stroke-width="3.2" stroke-dasharray="2 1"/><path d="M9 23.5H11M30 23.5H32M14.5 13V15M24.5 10.2V11.4M28.5 17V18" stroke="#f2e040" stroke-width="1"/><path d="M12.5 19V24.5M28 19V24.5" stroke="#22407c" stroke-width="0.7"/><clipPath id="c19"><rect x="0" y="0" width="27" height="59.4"/></clipPath><g transform="translate(6.8,25.6)" clip-path="url(#c19)"><rect width="28" height="60" fill="#ccc49c"/><path d="M0 0H12V14C8 20 4 26 0 28Z" fill="#98b46a"/><path d="M17 6H28V34H20Z" fill="#dcdccc"/><path d="M0 32H5V50H0Z" fill="#9ab46c"/><ellipse cx="14" cy="7" rx="3" ry="3" fill="#b0cc70"/><ellipse cx="12.5" cy="20" rx="7.5" ry="8.5" fill="#cc3452"/><ellipse cx="10.5" cy="16.5" rx="3" ry="3" fill="#e07080" opacity="0.7"/><ellipse cx="16.5" cy="37" rx="6.5" ry="7" fill="#c82c44"/><ellipse cx="9" cy="45.5" rx="6" ry="5.5" fill="#dc4456"/><ellipse cx="0.5" cy="39" rx="4" ry="5" fill="#cc3448"/><path d="M0 51C6 49 10 52 16 50S26 49 28 51V60H0Z" fill="#78a458"/><rect x="18" y="53" width="9" height="5" fill="#3a3a3a"/><rect x="19" y="54" width="7" height="3" fill="#8a8a8a"/></g><rect x="12" y="86" width="17" height="2.6" fill="#f4f4f4"/><rect x="13" y="89.5" width="15" height="1.6" fill="#e03040"/><rect x="13" y="91.5" width="15" height="1.6" fill="#dcefff" opacity="0.7"/><path d="M5 2.3h1.2v2.8H5zM7 2.3h2.6v2.8H7zM10.6 2.3h3v2.8h-3zM14.4 2.3h4.4v2.8h-4.4zM19.6 2.3h4v2.8h-4zM24.6 2.3h3.4v2.8h-3.4zM28.8 3.9h2.6v0.8h-2.6zM32 2.2h0.8v3.8H32zM37 2.2h0.8v3.4H37z" fill="#1a1a1a"/><text x="1.3" y="98.8" font-family="Liberation Sans" font-size="10.5" fill="#000" textLength="37" lengthAdjust="spacing" stroke="#000" stroke-width="0.45">Block ...</text></g>
<g transform="translate(393.17,117)"><path d="M0.7 25.3V17.6L16.4 1.2H24.6L40.5 17.6V25.3H37.8V100H3.3V25.3Z" fill="#22407c"/><path d="M3.2 23.2V18.6L17.5 4H23.5L37.9 18.6V23.2Z" fill="#16a0dc"/><rect x="3.6" y="23.2" width="33.9" height="2.4" fill="#48b6e6"/><rect x="6.2" y="25.5" width="28.6" height="73.5" fill="#16a0dc"/><path d="M4.6 21.2L17.2 7.6M23.8 7.6L36.4 21.2" stroke="#dc5664" stroke-width="3.2" stroke-dasharray="2 1"/><path d="M9 23.5H11M30 23.5H32M14.5 13V15M24.5 10.2V11.4M28.5 17V18" stroke="#f2e040" stroke-width="1"/><path d="M12.5 19V24.5M28 19V24.5" stroke="#22407c" stroke-width="0.7"/><clipPath id="c20"><rect x="0" y="0" width="27" height="59.4"/></clipPath><g transform="translate(6.8,25.6)" clip-path="url(#c20)"><rect width="28" height="60" fill="#ccc49c"/><path d="M0 0H12V14C8 20 4 26 0 28Z" fill="#98b46a"/><path d="M17 6H28V34H20Z" fill="#dcdccc"/><path d="M0 32H5V50H0Z" fill="#9ab46c"/><ellipse cx="14" cy="7" rx="3" ry="3" fill="#b0cc70"/><ellipse cx="12.5" cy="20" rx="7.5" ry="8.5" fill="#cc3452"/><ellipse cx="10.5" cy="16.5" rx="3" ry="3" fill="#e07080" opacity="0.7"/><ellipse cx="16.5" cy="37" rx="6.5" ry="7" fill="#c82c44"/><ellipse cx="9" cy="45.5" rx="6" ry="5.5" fill="#dc4456"/><ellipse cx="0.5" cy="39" rx="4" ry="5" fill="#cc3448"/><path d="M0 51C6 49 10 52 16 50S26 49 28 51V60H0Z" fill="#78a458"/><rect x="18" y="53" width="9" height="5" fill="#3a3a3a"/><rect x="19" y="54" width="7" height="3" fill="#8a8a8a"/></g><rect x="12" y="86" width="17" height="2.6" fill="#f4f4f4"/><rect x="13" y="89.5" width="15" height="1.6" fill="#e03040"/><rect x="13" y="91.5" width="15" height="1.6" fill="#dcefff" opacity="0.7"/><path d="M5 2.3h1.2v2.8H5zM7 2.3h2.6v2.8H7zM10.6 2.3h3v2.8h-3zM14.4 2.3h4.4v2.8h-4.4zM19.6 2.3h4v2.8h-4zM24.6 2.3h3.4v2.8h-3.4zM28.8 3.9h2.6v0.8h-2.6zM32 2.2h0.8v3.8H32zM37 2.2h0.8v3.4H37z" fill="#1a1a1a"/><text x="1.3" y="98.8" font-family="Liberation Sans" font-size="10.5" fill="#000" textLength="37" lengthAdjust="spacing" stroke="#000" stroke-width="0.45">Block ...</text></g>
<g transform="translate(14.00,217)"><path d="M0.7 25.3V17.6L16.4 1.2H24.6L40.5 17.6V25.3H37.8V100H3.3V25.3Z" fill="#22407c"/><path d="M3.2 23.2V18.6L17.5 4H23.5L37.9 18.6V23.2Z" fill="#16a0dc"/><rect x="3.6" y="23.2" width="33.9" height="2.4" fill="#48b6e6"/><rect x="6.2" y="25.5" width="28.6" height="73.5" fill="#16a0dc"/><path d="M4.6 21.2L17.2 7.6M23.8 7.6L36.4 21.2" stroke="#dc5664" stroke-width="3.2" stroke-dasharray="2 1"/><path d="M9 23.5H11M30 23.5H32M14.5 13V15M24.5 10.2V11.4M28.5 17V18" stroke="#f2e040" stroke-width="1"/><path d="M12.5 19V24.5M28 19V24.5" stroke="#22407c" stroke-width="0.7"/><clipPath id="c21"><rect x="0" y="0" width="27" height="59.4"/></clipPath><g transform="translate(6.8,25.6)" clip-path="url(#c21)"><rect width="28" height="60" fill="#1c1c2a"/><circle cx="1" cy="5" r="9" fill="#94b04a"/><rect y="45" width="11" height="15" fill="#6e4c2e"/><ellipse cx="3" cy="42.5" rx="5" ry="3" fill="#dcdcec"/><circle cx="15.5" cy="27" r="16" fill="#c49464"/><circle cx="15.5" cy="27" r="14.5" fill="#9cb84c"/><ellipse cx="15.5" cy="27" rx="6" ry="10" fill="#54502c" opacity="0.6"/><ellipse cx="15.5" cy="27" rx="3.6" ry="8" fill="#f2eca0"/><rect x="18" y="53" width="9" height="5" fill="#3a3a3a"/><rect x="19" y="54" width="7" height="3" fill="#8a8a8a"/></g><rect x="12" y="86" width="17" height="2.6" fill="#f4f4f4"/><rect x="13" y="89.5" width="15" height="1.6" fill="#e03040"/><rect x="13" y="91.5" width="15" height="1.6" fill="#dcefff" opacity="0.7"/><path d="M5 2.3h1.2v2.8H5zM7 2.3h2.6v2.8H7zM10.6 2.3h3v2.8h-3zM14.4 2.3h4.4v2.8h-4.4zM19.6 2.3h4v2.8h-4zM24.6 2.3h3.4v2.8h-3.4zM28.8 3.9h2.6v0.8h-2.6zM32 2.2h0.8v3.8H32zM37 2.2h0.8v3.4H37z" fill="#1a1a1a"/><text x="1.3" y="98.8" font-family="Liberation Sans" font-size="10.5" fill="#000" textLength="37" lengthAdjust="spacing" stroke="#000" stroke-width="0.45">Block ...</text></g>
<g transform="translate(56.13,217)"><path d="M0.7 25.3V17.6L16.4 1.2H24.6L40.5 17.6V25.3H37.8V100H3.3V25.3Z" fill="#22407c"/><path d="M3.2 23.2V18.6L17.5 4H23.5L37.9 18.6V23.2Z" fill="#16a0dc"/><rect x="3.6" y="23.2" width="33.9" height="2.4" fill="#48b6e6"/><rect x="6.2" y="25.5" width="28.6" height="73.5" fill="#16a0dc"/><path d="M4.6 21.2L17.2 7.6M23.8 7.6L36.4 21.2" stroke="#dc5664" stroke-width="3.2" stroke-dasharray="2 1"/><path d="M9 23.5H11M30 23.5H32M14.5 13V15M24.5 10.2V11.4M28.5 17V18" stroke="#f2e040" stroke-width="1"/><path d="M12.5 19V24.5M28 19V24.5" stroke="#22407c" stroke-width="0.7"/><clipPath id="c22"><rect x="0" y="0" width="27" height="59.4"/></clipPath><g transform="translate(6.8,25.6)" clip-path="url(#c22)"><rect width="28" height="60" fill="#1c1c2a"/><circle cx="1" cy="5" r="9" fill="#94b04a"/><rect y="45" width="11" height="15" fill="#6e4c2e"/><ellipse cx="3" cy="42.5" rx="5" ry="3" fill="#dcdcec"/><circle cx="15.5" cy="27" r="16" fill="#c49464"/><circle cx="15.5" cy="27" r="14.5" fill="#9cb84c"/><ellipse cx="15.5" cy="27" rx="6" ry="10" fill="#54502c" opacity="0.6"/><ellipse cx="15.5" cy="27" rx="3.6" ry="8" fill="#f2eca0"/><rect x="18" y="53" width="9" height="5" fill="#3a3a3a"/><rect x="19" y="54" width="7" height="3" fill="#8a8a8a"/></g><rect x="12" y="86" width="17" height="2.6" fill="#f4f4f4"/><rect x="13" y="89.5" width="15" height="1.6" fill="#e03040"/><rect x="13" y="91.5" width="15" height="1.6" fill="#dcefff" opacity="0.7"/><path d="M5 2.3h1.2v2.8H5zM7 2.3h2.6v2.8H7zM10.6 2.3h3v2.8h-3zM14.4 2.3h4.4v2.8h-4.4zM19.6 2.3h4v2.8h-4zM24.6 2.3h3.4v2.8h-3.4zM28.8 3.9h2.6v0.8h-2.6zM32 2.2h0.8v3.8H32zM37 2.2h0.8v3.4H37z" fill="#1a1a1a"/><text x="1.3" y="98.8" font-family="Liberation Sans" font-size="10.5" fill="#000" textLength="37" lengthAdjust="spacing" stroke="#000" stroke-width="0.45">Block ...</text></g>
<g transform="translate(98.26,217)"><path d="M0.7 25.3V17.6L16.4 1.2H24.6L40.5 17.6V25.3H37.8V100H3.3V25.3Z" fill="#22407c"/><path d="M3.2 23.2V18.6L17.5 4H23.5L37.9 18.6V23.2Z" fill="#16a0dc"/><rect x="3.6" y="23.2" width="33.9" height="2.4" fill="#48b6e6"/><rect x="6.2" y="25.5" width="28.6" height="73.5" fill="#16a0dc"/><path d="M4.6 21.2L17.2 7.6M23.8 7.6L36.4 21.2" stroke="#dc5664" stroke-width="3.2" stroke-dasharray="2 1"/><path d="M9 23.5H11M30 23.5H32M14.5 13V15M24.5 10.2V11.4M28.5 17V18" stroke="#f2e040" stroke-width="1"/><path d="M12.5 19V24.5M28 19V24.5" stroke="#22407c" stroke-width="0.7"/><clipPath id="c23"><rect x="0" y="0" width="27" height="59.4"/></clipPath><g transform="translate(6.8,25.6)" clip-path="url(#c23)"><rect width="28" height="60" fill="#1c1c2a"/><circle cx="1" cy="5" r="9" fill="#94b04a"/><rect y="45" width="11" height="15" fill="#6e4c2e"/><ellipse cx="3" cy="42.5" rx="5" ry="3" fill="#dcdcec"/><circle cx="15.5" cy="27" r="16" fill="#c49464"/><circle cx="15.5" cy="27" r="14.5" fill="#9cb84c"/><ellipse cx="15.5" cy="27" rx="6" ry="10" fill="#54502c" opacity="0.6"/><ellipse cx="15.5" cy="27" rx="3.6" ry="8" fill="#f2eca0"/><rect x="18" y="53" width="9" height="5" fill="#3a3a3a"/><rect x="19" y="54" width="7" height="3" fill="#8a8a8a"/></g><rect x="12" y="86" width="17" height="2.6" fill="#f4f4f4"/><rect x="13" y="89.5" width="15" height="1.6" fill="#e03040"/><rect x="13" y="91.5" width="15" height="1.6" fill="#dcefff" opacity="0.7"/><path d="M5 2.3h1.2v2.8H5zM7 2.3h2.6v2.8H7zM10.6 2.3h3v2.8h-3zM14.4 2.3h4.4v2.8h-4.4zM19.6 2.3h4v2.8h-4zM24.6 2.3h3.4v2.8h-3.4zM28.8 3.9h2.6v0.8h-2.6zM32 2.2h0.8v3.8H32zM37 2.2h0.8v3.4H37z" fill="#1a1a1a"/><text x="1.3" y="98.8" font-family="Liberation Sans" font-size="10.5" fill="#000" textLength="37" lengthAdjust="spacing" stroke="#000" stroke-width="0.45">Block ...</text></g>
<g transform="translate(140.39,217)"><path d="M0.7 25.3V17.6L16.4 1.2H24.6L40.5 17.6V25.3H37.8V100H3.3V25.3Z" fill="#22407c"/><path d="M3.2 23.2V18.6L17.5 4H23.5L37.9 18.6V23.2Z" fill="#16a0dc"/><rect x="3.6" y="23.2" width="33.9" height="2.4" fill="#48b6e6"/><rect x="6.2" y="25.5" width="28.6" height="73.5" fill="#16a0dc"/><path d="M4.6 21.2L17.2 7.6M23.8 7.6L36.4 21.2" stroke="#dc5664" stroke-width="3.2" stroke-dasharray="2 1"/><path d="M9 23.5H11M30 23.5H32M14.5 13V15M24.5 10.2V11.4M28.5 17V18" stroke="#f2e040" stroke-width="1"/><path d="M12.5 19V24.5M28 19V24.5" stroke="#22407c" stroke-width="0.7"/><clipPath id="c24"><rect x="0" y="0" width="27" height="59.4"/></clipPath><g transform="translate(6.8,25.6)" clip-path="url(#c24)"><rect width="28" height="60" fill="#1c1c2a"/><circle cx="1" cy="5" r="9" fill="#94b04a"/><rect y="45" width="11" height="15" fill="#6e4c2e"/><ellipse cx="3" cy="42.5" rx="5" ry="3" fill="#dcdcec"/><circle cx="15.5" cy="27" r="16" fill="#c49464"/><circle cx="15.5" cy="27" r="14.5" fill="#9cb84c"/><ellipse cx="15.5" cy="27" rx="6" ry="10" fill="#54502c" opacity="0.6"/><ellipse cx="15.5" cy="27" rx="3.6" ry="8" fill="#f2eca0"/><rect x="18" y="53" width="9" height="5" fill="#3a3a3a"/><rect x="19" y="54" width="7" height="3" fill="#8a8a8a"/></g><rect x="12" y="86" width="17" height="2.6" fill="#f4f4f4"/><rect x="13" y="89.5" width="15" height="1.6" fill="#e03040"/><rect x="13" y="91.5" width="15" height="1.6" fill="#dcefff" opacity="0.7"/><path d="M5 2.3h1.2v2.8H5zM7 2.3h2.6v2.8H7zM10.6 2.3h3v2.8h-3zM14.4 2.3h4.4v2.8h-4.4zM19.6 2.3h4v2.8h-4zM24.6 2.3h3.4v2.8h-3.4zM28.8 3.9h2.6v0.8h-2.6zM32 2.2h0.8v3.8H32zM37 2.2h0.8v3.4H37z" fill="#1a1a1a"/><text x="1.3" y="98.8" font-family="Liberation Sans" font-size="10.5" fill="#000" textLength="37" lengthAdjust="spacing" stroke="#000" stroke-width="0.45">Block ...</text></g>
<g transform="translate(182.52,217)"><path d="M0.7 25.3V17.6L16.4 1.2H24.6L40.5 17.6V25.3H37.8V100H3.3V25.3Z" fill="#22407c"/><path d="M3.2 23.2V18.6L17.5 4H23.5L37.9 18.6V23.2Z" fill="#16a0dc"/><rect x="3.6" y="23.2" width="33.9" height="2.4" fill="#48b6e6"/><rect x="6.2" y="25.5" width="28.6" height="73.5" fill="#16a0dc"/><path d="M4.6 21.2L17.2 7.6M23.8 7.6L36.4 21.2" stroke="#dc5664" stroke-width="3.2" stroke-dasharray="2 1"/><path d="M9 23.5H11M30 23.5H32M14.5 13V15M24.5 10.2V11.4M28.5 17V18" stroke="#f2e040" stroke-width="1"/><path d="M12.5 19V24.5M28 19V24.5" stroke="#22407c" stroke-width="0.7"/><clipPath id="c25"><rect x="0" y="0" width="27" height="59.4"/></clipPath><g transform="translate(6.8,25.6)" clip-path="url(#c25)"><rect width="28" height="60" fill="#1c1c2a"/><circle cx="1" cy="5" r="9" fill="#94b04a"/><rect y="45" width="11" height="15" fill="#6e4c2e"/><ellipse cx="3" cy="42.5" rx="5" ry="3" fill="#dcdcec"/><circle cx="15.5" cy="27" r="16" fill="#c49464"/><circle cx="15.5" cy="27" r="14.5" fill="#9cb84c"/><ellipse cx="15.5" cy="27" rx="6" ry="10" fill="#54502c" opacity="0.6"/><ellipse cx="15.5" cy="27" rx="3.6" ry="8" fill="#f2eca0"/><rect x="18" y="53" width="9" height="5" fill="#3a3a3a"/><rect x="19" y="54" width="7" height="3" fill="#8a8a8a"/></g><rect x="12" y="86" width="17" height="2.6" fill="#f4f4f4"/><rect x="13" y="89.5" width="15" height="1.6" fill="#e03040"/><rect x="13" y="91.5" width="15" height="1.6" fill="#dcefff" opacity="0.7"/><path d="M5 2.3h1.2v2.8H5zM7 2.3h2.6v2.8H7zM10.6 2.3h3v2.8h-3zM14.4 2.3h4.4v2.8h-4.4zM19.6 2.3h4v2.8h-4zM24.6 2.3h3.4v2.8h-3.4zM28.8 3.9h2.6v0.8h-2.6zM32 2.2h0.8v3.8H32zM37 2.2h0.8v3.4H37z" fill="#1a1a1a"/><text x="1.3" y="98.8" font-family="Liberation Sans" font-size="10.5" fill="#000" textLength="37" lengthAdjust="spacing" stroke="#000" stroke-width="0.45">Block ...</text></g>
<g transform="translate(224.65,217)"><path d="M0.7 25.3V17.6L16.4 1.2H24.6L40.5 17.6V25.3H37.8V100H3.3V25.3Z" fill="#22407c"/><path d="M3.2 23.2V18.6L17.5 4H23.5L37.9 18.6V23.2Z" fill="#16a0dc"/><rect x="3.6" y="23.2" width="33.9" height="2.4" fill="#48b6e6"/><rect x="6.2" y="25.5" width="28.6" height="73.5" fill="#16a0dc"/><path d="M4.6 21.2L17.2 7.6M23.8 7.6L36.4 21.2" stroke="#dc5664" stroke-width="3.2" stroke-dasharray="2 1"/><path d="M9 23.5H11M30 23.5H32M14.5 13V15M24.5 10.2V11.4M28.5 17V18" stroke="#f2e040" stroke-width="1"/><path d="M12.5 19V24.5M28 19V24.5" stroke="#22407c" stroke-width="0.7"/><clipPath id="c26"><rect x="0" y="0" width="27" height="59.4"/></clipPath><g transform="translate(6.8,25.6)" clip-path="url(#c26)"><rect width="28" height="60" fill="#78a462"/><path d="M16 14H28V30H20Z" fill="#90b878"/><ellipse cx="7" cy="8" rx="6" ry="6.5" fill="#d8303c"/><ellipse cx="5.5" cy="6.5" rx="2.4" ry="2.3" fill="#f06a70" opacity="0.6"/><ellipse cx="21" cy="7" rx="6.5" ry="6.5" fill="#d8303c"/><ellipse cx="19.5" cy="5.5" rx="2.6" ry="2.3" fill="#f06a70" opacity="0.6"/><ellipse cx="3" cy="22" rx="4" ry="6" fill="#d8303c"/><ellipse cx="1.5" cy="20.5" rx="1.6" ry="2.1" fill="#f06a70" opacity="0.6"/><ellipse cx="13" cy="24" rx="6.5" ry="8" fill="#d8303c"/><ellipse cx="11.5" cy="22.5" rx="2.6" ry="2.8" fill="#f06a70" opacity="0.6"/><ellipse cx="25" cy="30" rx="4" ry="5.5" fill="#d8303c"/><ellipse cx="23.5" cy="28.5" rx="1.6" ry="1.9" fill="#f06a70" opacity="0.6"/><ellipse cx="22" cy="40" rx="3.5" ry="5" fill="#d8303c"/><ellipse cx="20.5" cy="38.5" rx="1.4" ry="1.8" fill="#f06a70" opacity="0.6"/><ellipse cx="11" cy="42" rx="6.5" ry="7" fill="#d8303c"/><ellipse cx="9.5" cy="40.5" rx="2.6" ry="2.4" fill="#f06a70" opacity="0.6"/><ellipse cx="24" cy="48" rx="5" ry="6" fill="#d8303c"/><ellipse cx="22.5" cy="46.5" rx="2.0" ry="2.1" fill="#f06a70" opacity="0.6"/><ellipse cx="1" cy="46" rx="3.5" ry="7" fill="#d8303c"/><ellipse cx="-0.5" cy="44.5" rx="1.4" ry="2.4" fill="#f06a70" opacity="0.6"/><ellipse cx="13" cy="57" rx="6" ry="4.5" fill="#d8303c"/><ellipse cx="11.5" cy="55.5" rx="2.4" ry="1.6" fill="#f06a70" opacity="0.6"/><ellipse cx="2" cy="33" rx="3" ry="5" fill="#d8303c"/><ellipse cx="0.5" cy="31.5" rx="1.2" ry="1.8" fill="#f06a70" opacity="0.6"/><rect x="18" y="53" width="9" height="5" fill="#3a3a3a"/><rect x="19" y="54" width="7" height="3" fill="#8a8a8a"/></g><rect x="12" y="86" width="17" height="2.6" fill="#f4f4f4"/><rect x="13" y="89.5" width="15" height="1.6" fill="#e03040"/><rect x="13" y="91.5" width="15" height="1.6" fill="#dcefff" opacity="0.7"/><path d="M5 2.3h1.2v2.8H5zM7 2.3h2.6v2.8H7zM10.6 2.3h3v2.8h-3zM14.4 2.3h4.4v2.8h-4.4zM19.6 2.3h4v2.8h-4zM24.6 2.3h3.4v2.8h-3.4zM28.8 3.9h2.6v0.8h-2.6zM32 2.2h0.8v3.8H32zM37 2.2h0.8v3.4H37z" fill="#1a1a1a"/><text x="1.3" y="98.8" font-family="Liberation Sans" font-size="10.5" fill="#000" textLength="37" lengthAdjust="spacing" stroke="#000" stroke-width="0.45">Block ...</text></g>
<g transform="translate(266.78,217)"><path d="M0.7 25.3V17.6L16.4 1.2H24.6L40.5 17.6V25.3H37.8V100H3.3V25.3Z" fill="#22407c"/><path d="M3.2 23.2V18.6L17.5 4H23.5L37.9 18.6V23.2Z" fill="#16a0dc"/><rect x="3.6" y="23.2" width="33.9" height="2.4" fill="#48b6e6"/><rect x="6.2" y="25.5" width="28.6" height="73.5" fill="#16a0dc"/><path d="M4.6 21.2L17.2 7.6M23.8 7.6L36.4 21.2" stroke="#dc5664" stroke-width="3.2" stroke-dasharray="2 1"/><path d="M9 23.5H11M30 23.5H32M14.5 13V15M24.5 10.2V11.4M28.5 17V18" stroke="#f2e040" stroke-width="1"/><path d="M12.5 19V24.5M28 19V24.5" stroke="#22407c" stroke-width="0.7"/><clipPath id="c27"><rect x="0" y="0" width="27" height="59.4"/></clipPath><g transform="translate(6.8,25.6)" clip-path="url(#c27)"><rect width="28" height="60" fill="#78a462"/><path d="M16 14H28V30H20Z" fill="#90b878"/><ellipse cx="7" cy="8" rx="6" ry="6.5" fill="#d8303c"/><ellipse cx="5.5" cy="6.5" rx="2.4" ry="2.3" fill="#f06a70" opacity="0.6"/><ellipse cx="21" cy="7" rx="6.5" ry="6.5" fill="#d8303c"/><ellipse cx="19.5" cy="5.5" rx="2.6" ry="2.3" fill="#f06a70" opacity="0.6"/><ellipse cx="3" cy="22" rx="4" ry="6" fill="#d8303c"/><ellipse cx="1.5" cy="20.5" rx="1.6" ry="2.1" fill="#f06a70" opacity="0.6"/><ellipse cx="13" cy="24" rx="6.5" ry="8" fill="#d8303c"/><ellipse cx="11.5" cy="22.5" rx="2.6" ry="2.8" fill="#f06a70" opacity="0.6"/><ellipse cx="25" cy="30" rx="4" ry="5.5" fill="#d8303c"/><ellipse cx="23.5" cy="28.5" rx="1.6" ry="1.9" fill="#f06a70" opacity="0.6"/><ellipse cx="22" cy="40" rx="3.5" ry="5" fill="#d8303c"/><ellipse cx="20.5" cy="38.5" rx="1.4" ry="1.8" fill="#f06a70" opacity="0.6"/><ellipse cx="11" cy="42" rx="6.5" ry="7" fill="#d8303c"/><ellipse cx="9.5" cy="40.5" rx="2.6" ry="2.4" fill="#f06a70" opacity="0.6"/><ellipse cx="24" cy="48" rx="5" ry="6" fill="#d8303c"/><ellipse cx="22.5" cy="46.5" rx="2.0" ry="2.1" fill="#f06a70" opacity="0.6"/><ellipse cx="1" cy="46" rx="3.5" ry="7" fill="#d8303c"/><ellipse cx="-0.5" cy="44.5" rx="1.4" ry="2.4" fill="#f06a70" opacity="0.6"/><ellipse cx="13" cy="57" rx="6" ry="4.5" fill="#d8303c"/><ellipse cx="11.5" cy="55.5" rx="2.4" ry="1.6" fill="#f06a70" opacity="0.6"/><ellipse cx="2" cy="33" rx="3" ry="5" fill="#d8303c"/><ellipse cx="0.5" cy="31.5" rx="1.2" ry="1.8" fill="#f06a70" opacity="0.6"/><rect x="18" y="53" width="9" height="5" fill="#3a3a3a"/><rect x="19" y="54" width="7" height="3" fill="#8a8a8a"/></g><rect x="12" y="86" width="17" height="2.6" fill="#f4f4f4"/><rect x="13" y="89.5" width="15" height="1.6" fill="#e03040"/><rect x="13" y="91.5" width="15" height="1.6" fill="#dcefff" opacity="0.7"/><path d="M5 2.3h1.2v2.8H5zM7 2.3h2.6v2.8H7zM10.6 2.3h3v2.8h-3zM14.4 2.3h4.4v2.8h-4.4zM19.6 2.3h4v2.8h-4zM24.6 2.3h3.4v2.8h-3.4zM28.8 3.9h2.6v0.8h-2.6zM32 2.2h0.8v3.8H32zM37 2.2h0.8v3.4H37z" fill="#1a1a1a"/><text x="1.3" y="98.8" font-family="Liberation Sans" font-size="10.5" fill="#000" textLength="37" lengthAdjust="spacing" stroke="#000" stroke-width="0.45">Block ...</text></g>
<g transform="translate(308.91,217)"><path d="M0.7 25.3V17.6L16.4 1.2H24.6L40.5 17.6V25.3H37.8V100H3.3V25.3Z" fill="#22407c"/><path d="M3.2 23.2V18.6L17.5 4H23.5L37.9 18.6V23.2Z" fill="#16a0dc"/><rect x="3.6" y="23.2" width="33.9" height="2.4" fill="#48b6e6"/><rect x="6.2" y="25.5" width="28.6" height="73.5" fill="#16a0dc"/><path d="M4.6 21.2L17.2 7.6M23.8 7.6L36.4 21.2" stroke="#dc5664" stroke-width="3.2" stroke-dasharray="2 1"/><path d="M9 23.5H11M30 23.5H32M14.5 13V15M24.5 10.2V11.4M28.5 17V18" stroke="#f2e040" stroke-width="1"/><path d="M12.5 19V24.5M28 19V24.5" stroke="#22407c" stroke-width="0.7"/><clipPath id="c28"><rect x="0" y="0" width="27" height="59.4"/></clipPath><g transform="translate(6.8,25.6)" clip-path="url(#c28)"><rect width="28" height="60" fill="#78a462"/><path d="M16 14H28V30H20Z" fill="#90b878"/><ellipse cx="7" cy="8" rx="6" ry="6.5" fill="#d8303c"/><ellipse cx="5.5" cy="6.5" rx="2.4" ry="2.3" fill="#f06a70" opacity="0.6"/><ellipse cx="21" cy="7" rx="6.5" ry="6.5" fill="#d8303c"/><ellipse cx="19.5" cy="5.5" rx="2.6" ry="2.3" fill="#f06a70" opacity="0.6"/><ellipse cx="3" cy="22" rx="4" ry="6" fill="#d8303c"/><ellipse cx="1.5" cy="20.5" rx="1.6" ry="2.1" fill="#f06a70" opacity="0.6"/><ellipse cx="13" cy="24" rx="6.5" ry="8" fill="#d8303c"/><ellipse cx="11.5" cy="22.5" rx="2.6" ry="2.8" fill="#f06a70" opacity="0.6"/><ellipse cx="25" cy="30" rx="4" ry="5.5" fill="#d8303c"/><ellipse cx="23.5" cy="28.5" rx="1.6" ry="1.9" fill="#f06a70" opacity="0.6"/><ellipse cx="22" cy="40" rx="3.5" ry="5" fill="#d8303c"/><ellipse cx="20.5" cy="38.5" rx="1.4" ry="1.8" fill="#f06a70" opacity="0.6"/><ellipse cx="11" cy="42" rx="6.5" ry="7" fill="#d8303c"/><ellipse cx="9.5" cy="40.5" rx="2.6" ry="2.4" fill="#f06a70" opacity="0.6"/><ellipse cx="24" cy="48" rx="5" ry="6" fill="#d8303c"/><ellipse cx="22.5" cy="46.5" rx="2.0" ry="2.1" fill="#f06a70" opacity="0.6"/><ellipse cx="1" cy="46" rx="3.5" ry="7" fill="#d8303c"/><ellipse cx="-0.5" cy="44.5" rx="1.4" ry="2.4" fill="#f06a70" opacity="0.6"/><ellipse cx="13" cy="57" rx="6" ry="4.5" fill="#d8303c"/><ellipse cx="11.5" cy="55.5" rx="2.4" ry="1.6" fill="#f06a70" opacity="0.6"/><ellipse cx="2" cy="33" rx="3" ry="5" fill="#d8303c"/><ellipse cx="0.5" cy="31.5" rx="1.2" ry="1.8" fill="#f06a70" opacity="0.6"/><rect x="18" y="53" width="9" height="5" fill="#3a3a3a"/><rect x="19" y="54" width="7" height="3" fill="#8a8a8a"/></g><rect x="12" y="86" width="17" height="2.6" fill="#f4f4f4"/><rect x="13" y="89.5" width="15" height="1.6" fill="#e03040"/><rect x="13" y="91.5" width="15" height="1.6" fill="#dcefff" opacity="0.7"/><path d="M5 2.3h1.2v2.8H5zM7 2.3h2.6v2.8H7zM10.6 2.3h3v2.8h-3zM14.4 2.3h4.4v2.8h-4.4zM19.6 2.3h4v2.8h-4zM24.6 2.3h3.4v2.8h-3.4zM28.8 3.9h2.6v0.8h-2.6zM32 2.2h0.8v3.8H32zM37 2.2h0.8v3.4H37z" fill="#1a1a1a"/><text x="1.3" y="98.8" font-family="Liberation Sans" font-size="10.5" fill="#000" textLength="37" lengthAdjust="spacing" stroke="#000" stroke-width="0.45">Block ...</text></g>
<g transform="translate(351.04,217)"><path d="M0.7 25.3V17.6L16.4 1.2H24.6L40.5 17.6V25.3H37.8V100H3.3V25.3Z" fill="#22407c"/><path d="M3.2 23.2V18.6L17.5 4H23.5L37.9 18.6V23.2Z" fill="#16a0dc"/><rect x="3.6" y="23.2" width="33.9" height="2.4" fill="#48b6e6"/><rect x="6.2" y="25.5" width="28.6" height="73.5" fill="#16a0dc"/><path d="M4.6 21.2L17.2 7.6M23.8 7.6L36.4 21.2" stroke="#dc5664" stroke-width="3.2" stroke-dasharray="2 1"/><path d="M9 23.5H11M30 23.5H32M14.5 13V15M24.5 10.2V11.4M28.5 17V18" stroke="#f2e040" stroke-width="1"/><path d="M12.5 19V24.5M28 19V24.5" stroke="#22407c" stroke-width="0.7"/><clipPath id="c29"><rect x="0" y="0" width="27" height="59.4"/></clipPath><g transform="translate(6.8,25.6)" clip-path="url(#c29)"><rect width="28" height="60" fill="#78a462"/><path d="M16 14H28V30H20Z" fill="#90b878"/><ellipse cx="7" cy="8" rx="6" ry="6.5" fill="#d8303c"/><ellipse cx="5.5" cy="6.5" rx="2.4" ry="2.3" fill="#f06a70" opacity="0.6"/><ellipse cx="21" cy="7" rx="6.5" ry="6.5" fill="#d8303c"/><ellipse cx="19.5" cy="5.5" rx="2.6" ry="2.3" fill="#f06a70" opacity="0.6"/><ellipse cx="3" cy="22" rx="4" ry="6" fill="#d8303c"/><ellipse cx="1.5" cy="20.5" rx="1.6" ry="2.1" fill="#f06a70" opacity="0.6"/><ellipse cx="13" cy="24" rx="6.5" ry="8" fill="#d8303c"/><ellipse cx="11.5" cy="22.5" rx="2.6" ry="2.8" fill="#f06a70" opacity="0.6"/><ellipse cx="25" cy="30" rx="4" ry="5.5" fill="#d8303c"/><ellipse cx="23.5" cy="28.5" rx="1.6" ry="1.9" fill="#f06a70" opacity="0.6"/><ellipse cx="22" cy="40" rx="3.5" ry="5" fill="#d8303c"/><ellipse cx="20.5" cy="38.5" rx="1.4" ry="1.8" fill="#f06a70" opacity="0.6"/><ellipse cx="11" cy="42" rx="6.5" ry="7" fill="#d8303c"/><ellipse cx="9.5" cy="40.5" rx="2.6" ry="2.4" fill="#f06a70" opacity="0.6"/><ellipse cx="24" cy="48" rx="5" ry="6" fill="#d8303c"/><ellipse cx="22.5" cy="46.5" rx="2.0" ry="2.1" fill="#f06a70" opacity="0.6"/><ellipse cx="1" cy="46" rx="3.5" ry="7" fill="#d8303c"/><ellipse cx="-0.5" cy="44.5" rx="1.4" ry="2.4" fill="#f06a70" opacity="0.6"/><ellipse cx="13" cy="57" rx="6" ry="4.5" fill="#d8303c"/><ellipse cx="11.5" cy="55.5" rx="2.4" ry="1.6" fill="#f06a70" opacity="0.6"/><ellipse cx="2" cy="33" rx="3" ry="5" fill="#d8303c"/><ellipse cx="0.5" cy="31.5" rx="1.2" ry="1.8" fill="#f06a70" opacity="0.6"/><rect x="18" y="53" width="9" height="5" fill="#3a3a3a"/><rect x="19" y="54" width="7" height="3" fill="#8a8a8a"/></g><rect x="12" y="86" width="17" height="2.6" fill="#f4f4f4"/><rect x="13" y="89.5" width="15" height="1.6" fill="#e03040"/><rect x="13" y="91.5" width="15" height="1.6" fill="#dcefff" opacity="0.7"/><path d="M5 2.3h1.2v2.8H5zM7 2.3h2.6v2.8H7zM10.6 2.3h3v2.8h-3zM14.4 2.3h4.4v2.8h-4.4zM19.6 2.3h4v2.8h-4zM24.6 2.3h3.4v2.8h-3.4zM28.8 3.9h2.6v0.8h-2.6zM32 2.2h0.8v3.8H32zM37 2.2h0.8v3.4H37z" fill="#1a1a1a"/><text x="1.3" y="98.8" font-family="Liberation Sans" font-size="10.5" fill="#000" textLength="37" lengthAdjust="spacing" stroke="#000" stroke-width="0.45">Block ...</text></g>
<g transform="translate(393.17,217)"><path d="M0.7 25.3V17.6L16.4 1.2H24.6L40.5 17.6V25.3H37.8V100H3.3V25.3Z" fill="#22407c"/><path d="M3.2 23.2V18.6L17.5 4H23.5L37.9 18.6V23.2Z" fill="#16a0dc"/><rect x="3.6" y="23.2" width="33.9" height="2.4" fill="#48b6e6"/><rect x="6.2" y="25.5" width="28.6" height="73.5" fill="#16a0dc"/><path d="M4.6 21.2L17.2 7.6M23.8 7.6L36.4 21.2" stroke="#dc5664" stroke-width="3.2" stroke-dasharray="2 1"/><path d="M9 23.5H11M30 23.5H32M14.5 13V15M24.5 10.2V11.4M28.5 17V18" stroke="#f2e040" stroke-width="1"/><path d="M12.5 19V24.5M28 19V24.5" stroke="#22407c" stroke-width="0.7"/><clipPath id="c30"><rect x="0" y="0" width="27" height="59.4"/></clipPath><g transform="translate(6.8,25.6)" clip-path="url(#c30)"><rect width="28" height="60" fill="#78a462"/><path d="M16 14H28V30H20Z" fill="#90b878"/><ellipse cx="7" cy="8" rx="6" ry="6.5" fill="#d8303c"/><ellipse cx="5.5" cy="6.5" rx="2.4" ry="2.3" fill="#f06a70" opacity="0.6"/><ellipse cx="21" cy="7" rx="6.5" ry="6.5" fill="#d8303c"/><ellipse cx="19.5" cy="5.5" rx="2.6" ry="2.3" fill="#f06a70" opacity="0.6"/><ellipse cx="3" cy="22" rx="4" ry="6" fill="#d8303c"/><ellipse cx="1.5" cy="20.5" rx="1.6" ry="2.1" fill="#f06a70" opacity="0.6"/><ellipse cx="13" cy="24" rx="6.5" ry="8" fill="#d8303c"/><ellipse cx="11.5" cy="22.5" rx="2.6" ry="2.8" fill="#f06a70" opacity="0.6"/><ellipse cx="25" cy="30" rx="4" ry="5.5" fill="#d8303c"/><ellipse cx="23.5" cy="28.5" rx="1.6" ry="1.9" fill="#f06a70" opacity="0.6"/><ellipse cx="22" cy="40" rx="3.5" ry="5" fill="#d8303c"/><ellipse cx="20.5" cy="38.5" rx="1.4" ry="1.8" fill="#f06a70" opacity="0.6"/><ellipse cx="11" cy="42" rx="6.5" ry="7" fill="#d8303c"/><ellipse cx="9.5" cy="40.5" rx="2.6" ry="2.4" fill="#f06a70" opacity="0.6"/><ellipse cx="24" cy="48" rx="5" ry="6" fill="#d8303c"/><ellipse cx="22.5" cy="46.5" rx="2.0" ry="2.1" fill="#f06a70" opacity="0.6"/><ellipse cx="1" cy="46" rx="3.5" ry="7" fill="#d8303c"/><ellipse cx="-0.5" cy="44.5" rx="1.4" ry="2.4" fill="#f06a70" opacity="0.6"/><ellipse cx="13" cy="57" rx="6" ry="4.5" fill="#d8303c"/><ellipse cx="11.5" cy="55.5" rx="2.4" ry="1.6" fill="#f06a70" opacity="0.6"/><ellipse cx="2" cy="33" rx="3" ry="5" fill="#d8303c"/><ellipse cx="0.5" cy="31.5" rx="1.2" ry="1.8" fill="#f06a70" opacity="0.6"/><rect x="18" y="53" width="9" height="5" fill="#3a3a3a"/><rect x="19" y="54" width="7" height="3" fill="#8a8a8a"/></g><rect x="12" y="86" width="17" height="2.6" fill="#f4f4f4"/><rect x="13" y="89.5" width="15" height="1.6" fill="#e03040"/><rect x="13" y="91.5" width="15" height="1.6" fill="#dcefff" opacity="0.7"/><path d="M5 2.3h1.2v2.8H5zM7 2.3h2.6v2.8H7zM10.6 2.3h3v2.8h-3zM14.4 2.3h4.4v2.8h-4.4zM19.6 2.3h4v2.8h-4zM24.6 2.3h3.4v2.8h-3.4zM28.8 3.9h2.6v0.8h-2.6zM32 2.2h0.8v3.8H32zM37 2.2h0.8v3.4H37z" fill="#1a1a1a"/><text x="1.3" y="98.8" font-family="Liberation Sans" font-size="10.5" fill="#000" textLength="37" lengthAdjust="spacing" stroke="#000" stroke-width="0.45">Block ...</text></g>
<path d="M14 17.5H435.3" stroke="#00ff00" stroke-width="1.5"/>
<path d="M14 117.5H435.3" stroke="#00ff00" stroke-width="1.5"/>
<path d="M14 217.5H435.3" stroke="#00ff00" stroke-width="1.5"/>
<path d="M14 318.5H435.3" stroke="#00ff00" stroke-width="1.5"/>
<path d="M14.50 17V319" stroke="#00ff00" stroke-width="1.5"/>
<path d="M56.63 17V319" stroke="#00ff00" stroke-width="1.5"/>
<path d="M98.76 17V319" stroke="#00ff00" stroke-width="1.5"/>
<path d="M140.89 17V319" stroke="#00ff00" stroke-width="1.5"/>
<path d="M183.02 17V319" stroke="#00ff00" stroke-width="1.5"/>
<path d="M225.15 17V319" stroke="#00ff00" stroke-width="1.5"/>
<path d="M267.28 17V319" stroke="#00ff00" stroke-width="1.5"/>
<path d="M309.41 17V319" stroke="#00ff00" stroke-width="1.5"/>
<path d="M351.54 17V319" stroke="#00ff00" stroke-width="1.5"/>
<path d="M393.67 17V319" stroke="#00ff00" stroke-width="1.5"/>
<path d="M435.80 17V319" stroke="#00ff00" stroke-width="1.5"/>
<rect x="0" y="323" width="450" height="1.5" fill="#1a1adc"/>
<rect x="0" y="324.2" width="450" height="2.8" fill="#e0a0a4"/>
<rect x="0" y="327" width="450" height="17" fill="#d8d8d8"/>
<path d="M18.0 342.5H27.0L25.5 340H19.5Z" fill="#fff" stroke="#000" stroke-width="0.8"/>
<path d="M19.5 340.2A3 2.6 0 0 1 25.5 340.2Z" fill="#000"/>
<path d="M423.5 342.5H432.5L431 340H425Z" fill="#fff" stroke="#000" stroke-width="0.8"/>
<path d="M425 340.2A3 2.6 0 0 1 431 340.2Z" fill="#000"/>
<ellipse cx="225" cy="340.5" rx="1.2" ry="2.6" fill="none" stroke="#000" stroke-width="0.9"/>
<path d="M7.0 34H12.0M10.5 31V36.5" stroke="#000" stroke-width="1.4"/>
<path d="M435.5 33H440.5M439 30V35.5" stroke="#000" stroke-width="1.4"/>
<path d="M7.0 300.5H12.0M10.5 297.5V303.0" stroke="#000" stroke-width="1.4"/>
<path d="M435.5 300.5H440.5M439 297.5V303.0" stroke="#000" stroke-width="1.4"/>
<path d="M446 306.5H450" stroke="#000" stroke-width="1"/>
<path d="M450 0.6H0.6V344" fill="none" stroke="#0000ff" stroke-width="1.3" stroke-dasharray="3 2"/>
</svg>
<div class="btn" style="left:530px;top:621px;width:478px;height:19px">Preview</div>
<div class="a" style="left:530px;top:646px;width:13px;height:13px;border:1px solid #b4b4b8"></div>
<div class="t" style="left:551px;top:647px">Save Preview in Job</div>

<!-- filter combo -->
<div class="fld" style="left:3px;top:638px;width:517px;height:21px"></div>
<div class="t" style="left:10px;top:642px;letter-spacing:0.18px">Signa Jobs (*.sdf)</div>
<div class="dd" style="left:505px;top:638px;width:15px;height:21px"></div>
<div class="tri-d" style="left:507px;top:647px"></div>
<div class="a" style="left:1px;top:661px;width:1019px;height:8px;background:linear-gradient(#36363d,#5e5e66)"></div>
<div class="a" style="left:1012px;top:661px;width:8px;height:8px;background:linear-gradient(135deg,#38383f,#6a6a70)"></div>
<div class="a" style="left:1px;top:661px;width:16px;height:8px;background:linear-gradient(90deg,#606068,rgba(96,96,104,0))"></div>

<!-- filename -->
<div class="a" style="left:11px;top:679px;width:999px;height:25px;border:1px dotted #d0d0d0"></div>
<div class="fld" style="left:13px;top:681px;width:995px;height:21px;border-color:#a0a0a6"></div>
<div class="t" style="left:17px;top:685px">001_MSO.sdf</div>
<div class="a" style="left:91px;top:684px;width:1px;height:15px;background:#fff"></div>

<div class="btn" style="left:18px;top:711px;width:69px;height:19px">Delete</div>
<div class="btn" style="left:851px;top:710px;width:71px;height:21px;border:1px solid #d8d8dc;line-height:20px">Open</div>
<div class="btn" style="left:932px;top:711px;width:69px;height:19px">Cancel</div>
</body></html>
